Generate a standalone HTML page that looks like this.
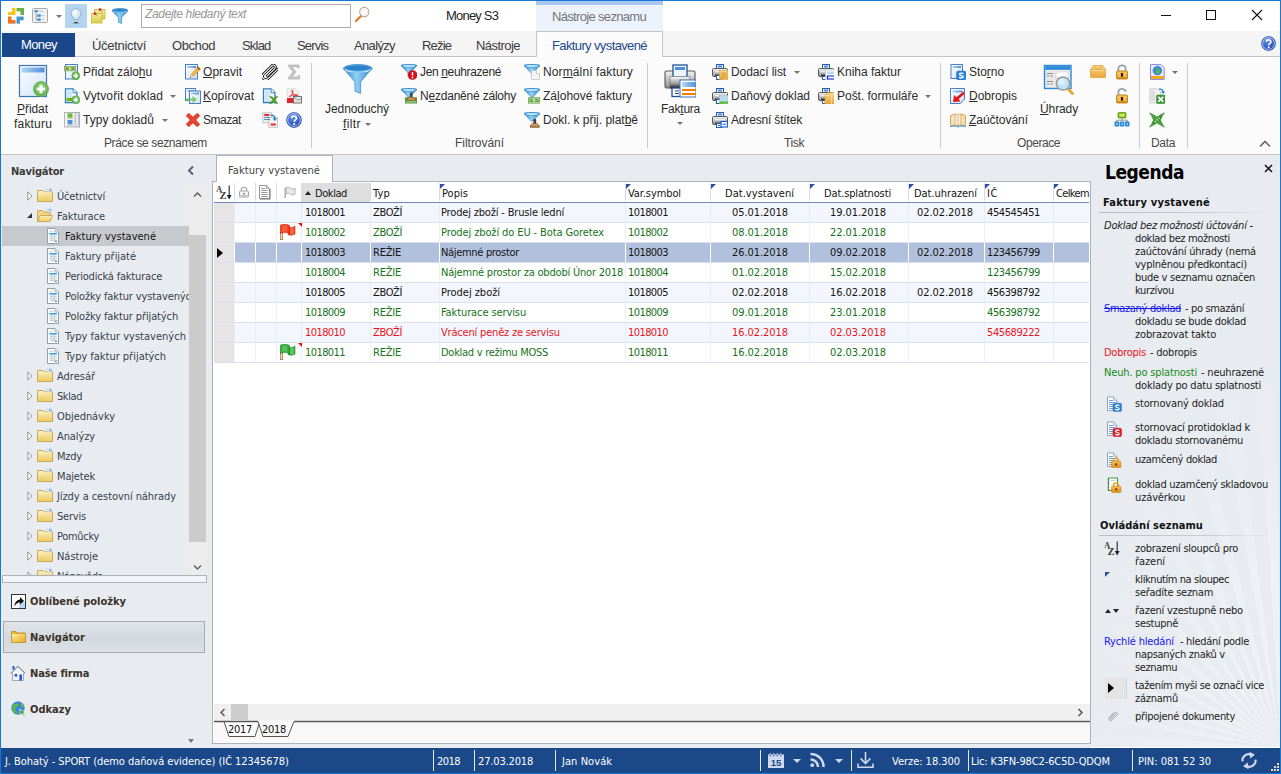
<!DOCTYPE html>
<html lang="cs"><head><meta charset="utf-8"><title>Money S3</title>
<style>
*{box-sizing:border-box;margin:0;padding:0}
html,body{width:1281px;height:774px;overflow:hidden;background:#e8ecf1;font-family:"Liberation Sans",sans-serif;font-size:12px;color:#222}
#win{position:absolute;left:0;top:0;width:1281px;height:774px;overflow:hidden;background:#e8ecf1}
#win>div{position:absolute}
#frame{left:0;top:0;width:1281px;height:774px;border:1px solid #1379d4;pointer-events:none;z-index:50}
#title{left:0;top:0;width:1281px;height:31px;background:#fff}
#tabs{left:0;top:31px;width:1281px;height:26px;background:#f5f5f6;border-bottom:1px solid #c6c6c6}
#ribbon{left:0;top:57px;width:1281px;height:98px;background:#fbfbfb;border-bottom:1px solid #c6c6c6}
.t{position:absolute;white-space:nowrap;line-height:14px}
.rl{position:absolute;white-space:nowrap;font-size:12px;color:#2b2b2b;line-height:14px}
.gl{position:absolute;white-space:nowrap;font-size:12px;color:#484848;line-height:14px}
.sep{position:absolute;top:6px;width:1px;height:85px;background:#c9c9c9}
.dd{position:absolute;width:0;height:0;border-left:3px solid transparent;border-right:3px solid transparent;border-top:3.5px solid #727272}
u{text-decoration:underline;text-underline-offset:1px;text-decoration-thickness:1px}
.tt{position:absolute;white-space:nowrap;font-family:"DejaVu Sans Condensed","Liberation Sans",sans-serif;font-size:11px;line-height:14px;color:#1a1a1a}
#nav{left:0;top:155px;width:212px;height:593px;background:#e8ecf1}
#center{left:213px;top:155px;width:878px;height:589px;overflow:visible}
#legend{left:1091px;top:155px;width:190px;height:593px;background:#e8ecf1}
#status{left:0;top:748px;width:1281px;height:26px;background:#1a4889}
</style></head><body>
<div id="win">
<svg width="0" height="0" style="position:absolute"><defs>
<linearGradient id="gFun" x1="0" y1="0" x2="1" y2="0"><stop offset="0" stop-color="#2f86cc"/><stop offset=".45" stop-color="#8fd0f4"/><stop offset="1" stop-color="#2f8ad0"/></linearGradient>
<linearGradient id="gWin" x1="0" y1="0" x2="1" y2="1"><stop offset="0" stop-color="#ffffff"/><stop offset="1" stop-color="#cfe2f8"/></linearGradient>
<linearGradient id="gTit" x1="0" y1="0" x2="1" y2="0"><stop offset="0" stop-color="#b5d6f3"/><stop offset="1" stop-color="#4c8fd9"/></linearGradient>
<linearGradient id="gFold" x1="0" y1="0" x2="0" y2="1"><stop offset="0" stop-color="#fbeeb8"/><stop offset="1" stop-color="#eccb62"/></linearGradient>
<linearGradient id="gPrn" x1="0" y1="0" x2="0" y2="1"><stop offset="0" stop-color="#f4f4f4"/><stop offset="1" stop-color="#8e8e8e"/></linearGradient>
<linearGradient id="gTray" x1="0" y1="0" x2="0" y2="1"><stop offset="0" stop-color="#ffffff"/><stop offset=".6" stop-color="#9a9a9a"/><stop offset="1" stop-color="#111"/></linearGradient>
<linearGradient id="gLock" x1="0" y1="0" x2="0" y2="1"><stop offset="0" stop-color="#f7c352"/><stop offset="1" stop-color="#d98a12"/></linearGradient>
<linearGradient id="gBox" x1="0" y1="0" x2="0" y2="1"><stop offset="0" stop-color="#f9d489"/><stop offset="1" stop-color="#eaa83a"/></linearGradient>
<radialGradient id="gHelp" cx=".4" cy=".3" r=".8"><stop offset="0" stop-color="#5f8fe8"/><stop offset="1" stop-color="#1c3fa8"/></radialGradient>
<radialGradient id="gPlus" cx=".5" cy=".4" r=".7"><stop offset="0" stop-color="#8fd07e"/><stop offset="1" stop-color="#5aa84a"/></radialGradient>
<radialGradient id="gBulb" cx=".4" cy=".35" r=".7"><stop offset="0" stop-color="#ffffff"/><stop offset="1" stop-color="#bcd6ec"/></radialGradient>
<linearGradient id="gYel" x1="0" y1="0" x2="0" y2="1"><stop offset="0" stop-color="#f4ec9a"/><stop offset="1" stop-color="#dccb48"/></linearGradient>
<linearGradient id="gBook" x1="0" y1="0" x2="1" y2="0"><stop offset="0" stop-color="#f3dcae"/><stop offset=".5" stop-color="#fff7e6"/><stop offset="1" stop-color="#f0d49c"/></linearGradient>
<linearGradient id="gYel2" x1="0" y1="0" x2="1" y2="1"><stop offset="0" stop-color="#fdf0a8"/><stop offset="1" stop-color="#e8a818"/></linearGradient>
</defs></svg>
<div id="title">
<div style="position:absolute;left:65px;top:4px;width:22px;height:24px;background:#b5d5ef"></div>
<svg style="position:absolute;left:8px;top:8px" width="16" height="16" viewBox="0 0 16 16"><path d="M4 0H7.5V7H0V4H4Z" fill="#fbc513"/><path d="M8.5 0H16V7H12.5V3.2H8.5Z" fill="#6db33f"/><path d="M0 8.5H3.5V12H7.5V15.5H0Z" fill="#ee7623"/><path d="M8.5 8.5H15.5V12H12V15.5H8.5Z" fill="#3d9ad6"/><path d="M0.5 15.8H7.5M9 15.8H12M12.3 12.3H15.5M15.8 8.8V12" stroke="#7a7a7a" stroke-width=".6" opacity=".7"/></svg>
<svg style="position:absolute;left:32px;top:8px" width="16" height="16" viewBox="0 0 16 16"><rect x=".5" y=".5" width="15" height="14" rx="1" fill="#f1f1f1" stroke="#a9a9a9" stroke-width="1"/><path d="M4 4.5V12H6M4 8H6" stroke="#8a8a8a" stroke-width=".7" fill="none"/><rect x="2.3" y="2" width="3.6" height="2.6" rx=".8" fill="#4a9ad8"/><rect x="5.3" y="6.3" width="3.6" height="2.6" rx=".8" fill="#4a9ad8"/><rect x="5.3" y="10.3" width="3.6" height="2.6" rx=".8" fill="#4a9ad8"/><path d="M6.8 3.3H11M9.8 7.6H12.5M9.8 11.6H12.5" stroke="#b5b5b5" stroke-width=".8"/></svg>
<div class="dd" style="left:56px;top:15px"></div>
<svg style="position:absolute;left:68px;top:8px" width="16" height="16" viewBox="0 0 16 16"><ellipse cx="8" cy="15.3" rx="4.5" ry=".7" fill="#6a8aa8" opacity=".45"/><path d="M8 .6C4.9 .6 3 2.9 3 5.4C3 7.8 5.2 9.2 6.2 12H9.8C10.8 9.2 13 7.8 13 5.4C13 2.9 11.1 .6 8 .6Z" fill="url(#gBulb)" stroke="#7fa9cf" stroke-width=".8"/><rect x="6.4" y="12" width="3.2" height="2" fill="#e8e8e8" stroke="#999" stroke-width=".4"/><path d="M6.6 14H9.4V15.2H6.6Z" fill="#222"/></svg>
<svg style="position:absolute;left:91px;top:8px" width="16" height="16" viewBox="0 0 16 16"><rect x="3.5" y="1.5" width="10.5" height="9.5" fill="url(#gYel)" stroke="#c9b93a" stroke-width=".8"/><rect x=".5" y="5.5" width="10.5" height="9.5" fill="url(#gYel)" stroke="#c9b93a" stroke-width=".8"/><path d="M9.5 2L11.5 4M4.5 6L6.5 8" stroke="#777" stroke-width=".7"/><circle cx="9" cy="1.6" r="1.4" fill="#e2242c"/><circle cx="4" cy="5.6" r="1.4" fill="#e2242c"/></svg>
<svg style="position:absolute;left:112px;top:8px" width="16" height="16" viewBox="0 0 16 16"><path d="M0 2.6 L6.4 9.5 V14.3 L9.6 15.5 V9.5 L16 2.6 Z" fill="url(#gFun)" stroke="#2a7cc4" stroke-width=".6"/><ellipse cx="8.0" cy="2.6" rx="8.0" ry="2.1" fill="#58aee8" stroke="#2a7cc4" stroke-width=".7"/><ellipse cx="8.0" cy="2.285" rx="7.04" ry="1.26" fill="#2c82c8"/><path d="M1.12 2.915 A6.88 1.5750000000000002 0 0 0 14.879999999999999 2.915" fill="none" stroke="#c4e6fa" stroke-width="0.60"/></svg>
<div style="position:absolute;left:141px;top:4px;width:210px;height:24px;border:1px solid #ababab;background:#fff"></div>
<span class="t" style="left:145px;top:7.3px;letter-spacing:-0.35px;font-style:italic;color:#969696;font-size:12px">Zadejte hledaný text</span>
<svg style="position:absolute;left:354px;top:6px" width="16" height="16" viewBox="0 0 16 16"><path d="M7.2 9.8L2 15" stroke="#e07a28" stroke-width="2.2" stroke-linecap="round"/><circle cx="10.3" cy="6" r="4.6" fill="#fdfdfd" stroke="#c9a58a" stroke-width="1.1"/><circle cx="10.3" cy="6" r="3.4" fill="#fff" stroke="#e8e8ee" stroke-width=".6"/></svg>
<span class="t" style="left:446px;top:8.0px;line-height:16px;letter-spacing:-0.80px;font-size:13px;color:#1e1e1e">Money S3</span>
<div style="position:absolute;left:536px;top:1px;width:127px;height:30px;background:#edf3fc"></div>
<div style="position:absolute;left:536px;top:1px;width:127px;height:4px;background:#a8c6ee"></div>
<span class="t" style="left:552px;top:9.0px;line-height:16px;letter-spacing:-0.67px;font-size:13px;color:#767676">Nástroje seznamu</span>
<div style="position:absolute;left:1161px;top:15px;width:10px;height:1px;background:#111"></div>
<div style="position:absolute;left:1206px;top:10px;width:10px;height:10px;border:1px solid #111"></div>
<svg style="position:absolute;left:1251px;top:9px" width="12" height="12" viewBox="0 0 12 12"><path d="M1 1L11 11M11 1L1 11" stroke="#111" stroke-width="1.1" fill="none"/></svg>
</div>
<div id="tabs">
<div style="position:absolute;left:2px;top:2px;width:73px;height:24px;background:#19478a"></div>
<span class="t" style="left:21px;top:6.0px;line-height:16px;letter-spacing:-0.60px;font-size:13px;color:#fff">Money</span>
<span class="t" style="left:92px;top:6.5px;line-height:16px;letter-spacing:-0.31px;font-size:13px;color:#3b3b3b">Účetnictví</span>
<span class="t" style="left:172px;top:6.5px;line-height:16px;letter-spacing:-0.42px;font-size:13px;color:#3b3b3b">Obchod</span>
<span class="t" style="left:242px;top:6.5px;line-height:16px;letter-spacing:-0.80px;font-size:13px;color:#3b3b3b">Sklad</span>
<span class="t" style="left:297px;top:6.5px;line-height:16px;letter-spacing:-0.80px;font-size:13px;color:#3b3b3b">Servis</span>
<span class="t" style="left:354px;top:6.5px;line-height:16px;letter-spacing:-0.65px;font-size:13px;color:#3b3b3b">Analýzy</span>
<span class="t" style="left:422px;top:6.5px;line-height:16px;letter-spacing:-0.80px;font-size:13px;color:#3b3b3b">Režie</span>
<span class="t" style="left:476px;top:6.5px;line-height:16px;letter-spacing:-0.55px;font-size:13px;color:#3b3b3b">Nástroje</span>
<div style="position:absolute;left:536px;top:0px;width:127px;height:27px;background:#fbfbfb;border:1px solid #c6c6c6;border-bottom:none"></div>
<span class="t" style="left:552px;top:6.5px;line-height:16px;letter-spacing:-0.62px;font-size:13px;color:#1d4a8c">Faktury vystavené</span>
<svg style="position:absolute;left:1261px;top:5px" width="15" height="15" viewBox="0 0 16 16"><circle cx="8" cy="8" r="7.5" fill="url(#gHelp)" stroke="#2747a8" stroke-width=".6"/><circle cx="8" cy="8" r="6.3" fill="none" stroke="#cfe0fb" stroke-width=".8"/><path d="M5.6 6.2C5.6 3.4 10.6 3.4 10.6 6.1C10.6 7.8 8.2 8 8.2 9.8" stroke="#fff" stroke-width="1.7" fill="none"/><circle cx="8.2" cy="12" r="1.05" fill="#fff"/></svg>
</div>
<div id="ribbon">
<svg style="position:absolute;left:18px;top:7px" width="32" height="34" viewBox="0 0 32 34"><rect x="1.5" y="1.5" width="27" height="31" fill="url(#gWin)" stroke="#3f73b8" stroke-width="1.2"/><rect x="3.5" y="3.5" width="23" height="5" fill="url(#gTit)"/><circle cx="23" cy="25" r="7.6" fill="url(#gPlus)" stroke="#58a548" stroke-width=".6"/><path d="M18.82 25H27.18M23 20.82V29.18" stroke="#fff" stroke-width="3.04"/></svg>
<span class="rl" style="left:17px;top:45.4px;letter-spacing:-0.06px;"><u>P</u>řidat</span>
<span class="rl" style="left:14px;top:60.0px;letter-spacing:0.19px;">fakturu</span>
<svg style="position:absolute;left:64px;top:7px" width="16" height="16" viewBox="0 0 16 16"><rect x="1.5" y=".5" width="12" height="14.5" fill="url(#gWin)" stroke="#4a7ec2" stroke-width="1"/><rect x="0" y="2" width="12" height="5.2" fill="#6c9a3c"/><rect x="1" y="3" width="10" height="3.2" fill="none" stroke="#cfe3b0" stroke-width=".7"/><circle cx="6" cy="4.6" r="1.3" fill="#cfe3b0"/><circle cx="11.8" cy="11.8" r="4" fill="url(#gPlus)" stroke="#58a548" stroke-width=".6"/><path d="M9.600000000000001 11.8H14.0M11.8 9.600000000000001V14.0" stroke="#fff" stroke-width="1.60"/></svg>
<span class="rl" style="left:83px;top:8.0px;letter-spacing:-0.08px;">Přidat zálo<u>h</u>u</span>
<svg style="position:absolute;left:64px;top:31px" width="16" height="16" viewBox="0 0 16 16"><path d="M1.5 .8H9L13 4.8V14.5H1.5Z" fill="#fff" stroke="#2a7cc4" stroke-width="1.3"/><path d="M9 .8V4.8H13" fill="#fff" stroke="#2a7cc4" stroke-width="1"/><rect x="2.6" y="2.5" width="6" height="8" fill="#cfe6f6"/><rect x="2.6" y="10" width="9" height="3" fill="#6eb400"/><circle cx="11.8" cy="11.8" r="4" fill="url(#gPlus)" stroke="#58a548" stroke-width=".6"/><path d="M9.600000000000001 11.8H14.0M11.8 9.600000000000001V14.0" stroke="#fff" stroke-width="1.60"/></svg>
<span class="rl" style="left:83px;top:32.0px;letter-spacing:0.12px;">Vytvořit doklad</span>
<div class="dd" style="left:170px;top:38px"></div>
<svg style="position:absolute;left:64px;top:55px" width="16" height="16" viewBox="0 0 16 16"><rect x=".5" y=".5" width="15" height="14.5" fill="#f4f4f4" stroke="#b4b4b4" stroke-width="1"/><rect x="3.5" y="1.3" width="5" height="4.4" fill="#6cb840"/><rect x="3.5" y="8" width="5" height="4.4" fill="#4a90d8"/><rect x="3" y="6.2" width="6" height="1" fill="#c8c8c8"/><rect x="3" y="13" width="6" height="1" fill="#c8c8c8"/><rect x="11" y="1" width="4" height="13.5" fill="#fff" stroke="#9a9a9a" stroke-width=".6"/><rect x="11.8" y="3" width="2.4" height="9.5" fill="#e8eef6" stroke="#8aa0c0" stroke-width=".5"/></svg>
<span class="rl" style="left:83px;top:56.0px;letter-spacing:0.02px;">Typy dokladů</span>
<div class="dd" style="left:162px;top:62px"></div>
<svg style="position:absolute;left:185px;top:7px" width="16" height="16" viewBox="0 0 16 16"><rect x="0.5" y="0.5" width="12" height="14.5" fill="url(#gWin)" stroke="#4a7ec2" stroke-width="1"/><rect x="2" y="2" width="9" height="2" fill="url(#gTit)"/><path d="M13 2.5L15.5 5L8 12.5L5 13.5L6 10.5Z" fill="#f2b24a" stroke="#c98a2a" stroke-width=".5"/><path d="M13 2.5L15.5 5L14.3 6.2L11.8 3.7Z" fill="#a8541c"/><path d="M6 10.5L5 13.5L8 12.5Z" fill="#f4e6cc"/><path d="M5.4 12.3L5 13.5L6.2 13.1Z" fill="#333"/></svg>
<span class="rl" style="left:203px;top:8.0px;letter-spacing:0.05px;"><u>O</u>pravit</span>
<svg style="position:absolute;left:185px;top:31px" width="16" height="16" viewBox="0 0 16 16"><rect x="0.5" y="0.5" width="10" height="12" fill="url(#gWin)" stroke="#4a7ec2" stroke-width="1"/><rect x="2" y="2" width="7" height="2" fill="url(#gTit)"/><rect x="4.5" y="3.0" width="11" height="12.5" fill="url(#gWin)" stroke="#4a7ec2" stroke-width="1"/><rect x="6" y="4.5" width="8" height="2" fill="url(#gTit)"/><path d="M1 10.5H7.5V8L12 11.5L7.5 15V12.5H1Z" fill="#6cc460" opacity=".9"/></svg>
<span class="rl" style="left:203px;top:32.0px;letter-spacing:-0.04px;"><u>K</u>opírovat</span>
<svg style="position:absolute;left:185px;top:55px" width="16" height="16" viewBox="0 0 16 16"><path d="M2.2 3.8L3.8 2.2L8 6.4L12.2 2.2L13.8 3.8L9.6 8L13.8 12.2L12.2 13.8L8 9.6L3.8 13.8L2.2 12.2L6.4 8Z" fill="#ec5e48" stroke="#e4442f" stroke-width="2.2" stroke-linejoin="round"/></svg>
<span class="rl" style="left:203px;top:56.0px;letter-spacing:-0.45px;">Smazat</span>
<svg style="position:absolute;left:262px;top:7px" width="16" height="16" viewBox="0 0 16 16"><g transform="translate(8 8) rotate(-45)"><path d="M-4.6 .9H5.8A2 2 0 0 0 5.8 -3.1H-6A3.25 3.25 0 0 0 -6 3.4H7.4" fill="none" stroke="#111" stroke-width="2.7" stroke-linecap="round"/><path d="M-4.6 .9H5.8A2 2 0 0 0 5.8 -3.1H-6A3.25 3.25 0 0 0 -6 3.4H7.4" fill="none" stroke="#fff" stroke-width="1" stroke-linecap="round"/></g></svg>
<svg style="position:absolute;left:286px;top:7px" width="16" height="16" viewBox="0 0 16 16"><path d="M2.5 1H13V4H11.8L11.2 2.6H6L10 7.8L5.8 13.2H11.4L12.2 11.6H13.4V15H2.5V13.6L7 7.9L2.5 2.2Z" fill="#c9c9c9" stroke="#a4a4a4" stroke-width=".6"/></svg>
<svg style="position:absolute;left:262px;top:31px" width="16" height="16" viewBox="0 0 16 16"><path d="M1.5 .8H9L13 4.8V14.5H1.5Z" fill="#fff" stroke="#2a7cc4" stroke-width="1.3"/><path d="M9 .8V4.8H13" fill="#fff" stroke="#2a7cc4" stroke-width="1"/><rect x="2.6" y="2.5" width="5.8" height="10.5" fill="#cfe6f6"/><path d="M7.5 8.5H10L11.8 10.6L13.8 8.5H16L13 11.8L16 15.5H13.6L11.8 13.2L9.8 15.5H7.3L10.5 11.8Z" fill="#55a52a" stroke="#3c8a1a" stroke-width=".4"/></svg>
<svg style="position:absolute;left:286px;top:31px" width="16" height="16" viewBox="0 0 16 16"><path d="M1 .5H9.5L13 4V15H1Z" fill="#f1f1f1" stroke="#d0d0d0" stroke-width=".6"/><path d="M3.5 8.5C6 7.5 7.5 4.5 6.8 2.6C6.4 1.6 5.4 2.4 6 4.2C6.8 6.6 9.4 8.2 11.5 7.6C12.4 7.2 11.6 6.4 10 6.6C7.5 6.9 5 8 3.5 8.5Z" fill="none" stroke="#e2242c" stroke-width=".9"/><rect x="1" y="10" width="6" height="5" fill="#e2242c"/><rect x="7.5" y="8.5" width="8" height="6.5" fill="#e4e4e4" stroke="#555" stroke-width=".8"/><path d="M7.8 9L11.5 12L15.3 11" fill="none" stroke="#777" stroke-width=".7"/></svg>
<svg style="position:absolute;left:262px;top:55px" width="16" height="16" viewBox="0 0 16 16"><rect x=".8" y=".8" width="9" height="10" fill="#f0f0f0" stroke="#b8b8b8" stroke-width=".8"/><rect x="6.8" y="5.2" width="8.6" height="10" fill="#f0f0f0" stroke="#b8b8b8" stroke-width=".8"/><rect x="2" y="2" width="5.5" height="2" rx="1" fill="#e2242c"/><path d="M2 5.5H8M2 7.5H8" stroke="#4a7ec2" stroke-width=".9"/><rect x="8.5" y="11.5" width="5.5" height="2" rx="1" fill="#e2242c"/><path d="M8.5 3.2C11.5 2.8 12.8 4.2 12.8 6.5" fill="none" stroke="#2a7cc4" stroke-width="1.3"/><path d="M10.6 6.2H15L12.8 9Z" fill="#2a7cc4"/></svg>
<svg style="position:absolute;left:286px;top:55px" width="16" height="16" viewBox="0 0 16 16"><circle cx="8" cy="8" r="7.5" fill="url(#gHelp)" stroke="#2747a8" stroke-width=".6"/><circle cx="8" cy="8" r="6.3" fill="none" stroke="#cfe0fb" stroke-width=".8"/><path d="M5.6 6.2C5.6 3.4 10.6 3.4 10.6 6.1C10.6 7.8 8.2 8 8.2 9.8" stroke="#fff" stroke-width="1.7" fill="none"/><circle cx="8.2" cy="12" r="1.05" fill="#fff"/></svg>
<span class="gl" style="left:104px;top:78.7px;letter-spacing:-0.38px;">Práce se seznamem</span>
<div class="sep" style="left:311px"></div>
<svg style="position:absolute;left:342px;top:6px" width="32" height="32" viewBox="0 0 32 32"><path d="M1.5 5.5600000000000005 L12.9 18.9 V28.18 L18.6 30.5 V18.9 L30.0 5.5600000000000005 Z" fill="url(#gFun)" stroke="#2a7cc4" stroke-width=".6"/><ellipse cx="15.75" cy="5.5600000000000005" rx="14.25" ry="4.0600000000000005" fill="#58aee8" stroke="#2a7cc4" stroke-width=".7"/><ellipse cx="15.75" cy="4.9510000000000005" rx="12.54" ry="2.4360000000000004" fill="#2c82c8"/><path d="M3.495 6.1690000000000005 A12.254999999999999 3.0450000000000004 0 0 0 28.005 6.1690000000000005" fill="none" stroke="#c4e6fa" stroke-width="1.02"/></svg>
<span class="rl" style="left:325px;top:45.4px;letter-spacing:-0.07px;">Jednoduchý</span>
<span class="rl" style="left:343px;top:60.0px;letter-spacing:0.40px;"><u>f</u>iltr</span>
<div class="dd" style="left:365px;top:66px"></div>
<svg style="position:absolute;left:401px;top:7px" width="16" height="16" viewBox="0 0 16 16"><path d="M0 1.5 L7.0 9 H9.0 L16 1.5 Z" fill="url(#gFun)" stroke="#2a7cc4" stroke-width=".5"/><ellipse cx="8.0" cy="1.6" rx="8.0" ry="1.6" fill="#3e96d8" stroke="#2a7cc4" stroke-width=".5"/><ellipse cx="8.0" cy="2" rx="6.5" ry="1" fill="#bfe4f8"/><circle cx="11.5" cy="11" r="4.6" fill="#d8121c" stroke="#a80c12" stroke-width=".5"/><path d="M11.5 8V11.6" stroke="#fff" stroke-width="1.5"/><circle cx="11.5" cy="13.4" r=".85" fill="#fff"/></svg>
<span class="rl" style="left:420px;top:8.0px;letter-spacing:-0.36px;">Jen <u>n</u>euhrazené</span>
<svg style="position:absolute;left:401px;top:31px" width="16" height="16" viewBox="0 0 16 16"><path d="M0 1.5 L7.0 9 H9.0 L16 1.5 Z" fill="url(#gFun)" stroke="#2a7cc4" stroke-width=".5"/><ellipse cx="8.0" cy="1.6" rx="8.0" ry="1.6" fill="#3e96d8" stroke="#2a7cc4" stroke-width=".5"/><ellipse cx="8.0" cy="2" rx="6.5" ry="1" fill="#bfe4f8"/><rect x="4" y="9.3" width="12" height="6.2" fill="#5a9a3a"/><rect x="9" y="4.5" width="2.6" height="5" rx="1" fill="#444"/><path d="M6 12.5C6 10.5 7.5 9.2 10.3 9.2C13 9.2 14.6 10.5 14.6 12.5Z" fill="#c8925a" stroke="#7a4a1a" stroke-width=".5"/><path d="M5.5 13.8H15" stroke="#d8ecc8" stroke-width=".8"/></svg>
<span class="rl" style="left:420px;top:32.0px;letter-spacing:-0.21px;">N<u>e</u>zdaněné zálohy</span>
<svg style="position:absolute;left:524px;top:7px" width="16" height="16" viewBox="0 0 16 16"><path d="M0 1.5 L7.0 9 H9.0 L16 1.5 Z" fill="url(#gFun)" stroke="#2a7cc4" stroke-width=".5"/><ellipse cx="8.0" cy="1.6" rx="8.0" ry="1.6" fill="#3e96d8" stroke="#2a7cc4" stroke-width=".5"/><ellipse cx="8.0" cy="2" rx="6.5" ry="1" fill="#bfe4f8"/><path d="M7.5 6.5H12.5L15.5 9.5V15.5H7.5Z" fill="#f4f4f4" stroke="#c0c0c0" stroke-width=".7"/><path d="M12.5 6.5V9.5H15.5" fill="#fff" stroke="#c0c0c0" stroke-width=".6"/></svg>
<span class="rl" style="left:543px;top:8.0px;letter-spacing:0.12px;">Nor<u>m</u>ální faktury</span>
<svg style="position:absolute;left:524px;top:31px" width="16" height="16" viewBox="0 0 16 16"><path d="M0 1.5 L7.0 9 H9.0 L16 1.5 Z" fill="url(#gFun)" stroke="#2a7cc4" stroke-width=".5"/><ellipse cx="8.0" cy="1.6" rx="8.0" ry="1.6" fill="#3e96d8" stroke="#2a7cc4" stroke-width=".5"/><ellipse cx="8.0" cy="2" rx="6.5" ry="1" fill="#bfe4f8"/><rect x="4" y="9.3" width="12" height="6.2" fill="#5a9a3a"/><rect x="5" y="10.3" width="10" height="4.2" fill="none" stroke="#d2e8be" stroke-width=".7"/><circle cx="10" cy="12.4" r="1.4" fill="#d2e8be"/><path d="M6.2 12.4H7.4M12.6 12.4H13.8" stroke="#d2e8be" stroke-width="1"/></svg>
<span class="rl" style="left:543px;top:32.0px;letter-spacing:0.02px;">Zá<u>l</u>ohové faktury</span>
<svg style="position:absolute;left:524px;top:55px" width="16" height="16" viewBox="0 0 16 16"><path d="M0 1.5 L7.0 9 H9.0 L16 1.5 Z" fill="url(#gFun)" stroke="#2a7cc4" stroke-width=".5"/><ellipse cx="8.0" cy="1.6" rx="8.0" ry="1.6" fill="#3e96d8" stroke="#2a7cc4" stroke-width=".5"/><ellipse cx="8.0" cy="2" rx="6.5" ry="1" fill="#bfe4f8"/><rect x="9.4" y="7" width="2.8" height="5" rx="1" fill="#3c3c3c"/><path d="M6.2 14.6C6.2 12.4 7.8 11.4 10.8 11.4C13.6 11.4 15.4 12.4 15.4 14.6Z" fill="#d09a5c" stroke="#7a4a1a" stroke-width=".6"/><path d="M6 15.2H15.6" stroke="#7a4a1a" stroke-width=".9"/></svg>
<span class="rl" style="left:543px;top:56.0px;letter-spacing:-0.02px;">Dokl. k přij. plat<u>b</u>ě</span>
<span class="gl" style="left:455px;top:78.7px;letter-spacing:-0.03px;">Filtrování</span>
<div class="sep" style="left:647px"></div>
<svg style="position:absolute;left:664px;top:7px" width="32" height="34" viewBox="0 0 32 34"><rect x="1" y="7" width="30" height="17" rx="1.5" fill="url(#gPrn)" stroke="#555" stroke-width="1.1"/><rect x="9" y="1" width="14" height="13" fill="#eef5fd" stroke="#1f4f9a" stroke-width="1.3"/><rect x="11" y="3" width="10" height="3" fill="#4c8fd9"/><rect x="6" y="12.5" width="20" height="12" rx="1" fill="url(#gTray)" stroke="#6a6a6a" stroke-width=".7"/><rect x="8" y="24" width="9" height="8.5" fill="#fff" stroke="#1f4f9a" stroke-width="1.3"/><path d="M11 27H15M11 29.5H15" stroke="#1f4f9a" stroke-width="1.1"/><rect x="16" y="16" width="16" height="17" fill="#fff" stroke="#3f73b8" stroke-width="1"/><rect x="18" y="18" width="14" height="5" fill="url(#gTit)"/><rect x="18" y="25" width="14" height="2" fill="#f57c00"/><rect x="18" y="29" width="14" height="2" fill="#f57c00"/></svg>
<span class="rl" style="left:661px;top:45.4px;letter-spacing:-0.24px;">Fak<u>t</u>ura</span>
<div class="dd" style="left:677px;top:65px"></div>
<svg style="position:absolute;left:712px;top:7px" width="16" height="16" viewBox="0 0 16 16"><rect x="4.5" y=".5" width="7" height="6" fill="#eaf3fd" stroke="#2a5aa8" stroke-width="1"/><rect x="6" y="1.5" width="4" height="2" fill="#4c8fd9"/><rect x=".5" y="4.5" width="15" height="8" rx="1" fill="url(#gPrn)" stroke="#5a5a5a" stroke-width="1"/><rect x="3" y="7" width="10" height="5" fill="url(#gTray)"/><rect x="4.5" y="11.5" width="5" height="4" fill="#fff" stroke="#2a5aa8" stroke-width="1"/><rect x="7.5" y="6.5" width="8.5" height="9" fill="url(#gBox)" stroke="#d8a850" stroke-width=".6"/><path d="M9 9H15M9 11H15M9 13H13" stroke="#c8922a" stroke-width=".8"/></svg>
<span class="rl" style="left:731px;top:8.0px;letter-spacing:-0.09px;">Dodací list</span>
<div class="dd" style="left:794px;top:14px"></div>
<svg style="position:absolute;left:712px;top:31px" width="16" height="16" viewBox="0 0 16 16"><rect x="4.5" y=".5" width="7" height="6" fill="#eaf3fd" stroke="#2a5aa8" stroke-width="1"/><rect x="6" y="1.5" width="4" height="2" fill="#4c8fd9"/><rect x=".5" y="4.5" width="15" height="8" rx="1" fill="url(#gPrn)" stroke="#5a5a5a" stroke-width="1"/><rect x="3" y="7" width="10" height="5" fill="url(#gTray)"/><rect x="4.5" y="11.5" width="5" height="4" fill="#fff" stroke="#2a5aa8" stroke-width="1"/><rect x="7.5" y="7.5" width="8.5" height="8" fill="#bcdcee" stroke="#8ab8d8" stroke-width=".5"/><rect x="7.5" y="13.6" width="8.5" height="2" fill="#5cb818"/></svg>
<span class="rl" style="left:731px;top:32.0px;letter-spacing:-0.03px;">Daňový doklad</span>
<svg style="position:absolute;left:712px;top:55px" width="16" height="16" viewBox="0 0 16 16"><rect x="4.5" y=".5" width="7" height="6" fill="#eaf3fd" stroke="#2a5aa8" stroke-width="1"/><rect x="6" y="1.5" width="4" height="2" fill="#4c8fd9"/><rect x=".5" y="4.5" width="15" height="8" rx="1" fill="url(#gPrn)" stroke="#5a5a5a" stroke-width="1"/><rect x="3" y="7" width="10" height="5" fill="url(#gTray)"/><rect x="4.5" y="11.5" width="5" height="4" fill="#fff" stroke="#2a5aa8" stroke-width="1"/><rect x="9" y="9.5" width="6.5" height="5.5" fill="#fff" stroke="#1f5fc8" stroke-width="1.2"/><path d="M10.5 12.2H14M6 13.5H8" stroke="#1f5fc8" stroke-width="1.1"/></svg>
<span class="rl" style="left:731px;top:56.0px;letter-spacing:-0.17px;">Adresní štítek</span>
<svg style="position:absolute;left:818px;top:7px" width="16" height="16" viewBox="0 0 16 16"><rect x="4.5" y=".5" width="7" height="6" fill="#eaf3fd" stroke="#2a5aa8" stroke-width="1"/><rect x="6" y="1.5" width="4" height="2" fill="#4c8fd9"/><rect x=".5" y="4.5" width="15" height="8" rx="1" fill="url(#gPrn)" stroke="#5a5a5a" stroke-width="1"/><rect x="3" y="7" width="5" height="5" fill="url(#gTray)"/><path d="M4.5 11.5V15.5H8" fill="none" stroke="#2a5aa8" stroke-width="1"/><rect x="7.5" y="6" width="9" height="10" fill="#fff" stroke="#a8c8e8" stroke-width=".6"/><rect x="9" y="7.5" width="7.5" height="2.5" fill="#b8d8f4"/><path d="M9.5 11.5V15.5M9.5 12H16.5M9.5 15H16.5" stroke="#1010e0" stroke-width="1.2" fill="none"/></svg>
<span class="rl" style="left:837px;top:8.0px;">Kniha faktur</span>
<svg style="position:absolute;left:818px;top:31px" width="16" height="16" viewBox="0 0 16 16"><rect x="4.5" y=".5" width="7" height="6" fill="#eaf3fd" stroke="#2a5aa8" stroke-width="1"/><rect x="6" y="1.5" width="4" height="2" fill="#4c8fd9"/><rect x=".5" y="4.5" width="15" height="8" rx="1" fill="url(#gPrn)" stroke="#5a5a5a" stroke-width="1"/><rect x="3" y="7" width="5" height="5" fill="url(#gTray)"/><path d="M4.5 11.5V15.5H8" fill="none" stroke="#2a5aa8" stroke-width="1"/><path d="M7 7L10 4.5H16.5V16H7Z" fill="url(#gBox)" stroke="#d89a30" stroke-width=".6"/><path d="M7 7.5H13.5L16.5 5M13.5 7.5V16" stroke="#fbe3b0" stroke-width=".7" fill="none"/></svg>
<span class="rl" style="left:837px;top:32.0px;letter-spacing:-0.02px;">Pošt. formuláře</span>
<div class="dd" style="left:925px;top:38px"></div>
<span class="gl" style="left:784px;top:78.7px;letter-spacing:-0.39px;">Tisk</span>
<div class="sep" style="left:940px"></div>
<svg style="position:absolute;left:950px;top:7px" width="16" height="16" viewBox="0 0 16 16"><rect x="1.0" y="0.5" width="11.5" height="14" fill="url(#gWin)" stroke="#4a7ec2" stroke-width="1"/><rect x="2.5" y="2" width="8.5" height="2" fill="url(#gTit)"/><rect x="6.5" y="7" width="9.5" height="9" rx="2" fill="#2a86d8" stroke="#1a6ab8" stroke-width=".5"/><path d="M13.4 9.6C12.4 8.8 9.4 8.7 9.4 10.3C9.4 12 13.3 11.1 13.3 12.8C13.3 14.3 10.2 14.2 9.1 13.4" fill="none" stroke="#fff" stroke-width="1.3"/></svg>
<span class="rl" style="left:969px;top:8.0px;letter-spacing:-0.06px;">Sto<u>r</u>no</span>
<svg style="position:absolute;left:950px;top:31px" width="16" height="16" viewBox="0 0 16 16"><path d="M.5 .5H14.5V11L10.5 15.5H.5Z" fill="url(#gWin)" stroke="#4a7ec2" stroke-width="1"/><rect x="2.5" y="2.5" width="10" height="2" fill="url(#gTit)"/><path d="M13.6 3.6L14.4 6L8.6 11L10.4 13.6L3 14L4 7L6.4 9.2Z" fill="#e8141c"/></svg>
<span class="rl" style="left:969px;top:32.0px;"><u>D</u>obropis</span>
<svg style="position:absolute;left:950px;top:55px" width="16" height="16" viewBox="0 0 16 16"><path d="M.5 3.5L5 2C6.5 1.7 7.4 2.3 8 3.2C8.6 2.3 9.5 1.7 11 2L15.5 3.5V14L11 13C9.6 12.8 8.6 13.2 8 14C7.4 13.2 6.4 12.8 5 13L.5 14Z" fill="url(#gBook)" stroke="#c8984a" stroke-width=".8"/><path d="M5 2V13M11 2V13M8 3.2V14" stroke="#c8984a" stroke-width=".7"/><path d="M.5 14.5C4 13.6 6.5 13.8 8 15C9.5 13.8 12 13.6 15.5 14.5" fill="none" stroke="#2a7cc4" stroke-width="1"/></svg>
<span class="rl" style="left:969px;top:56.0px;letter-spacing:-0.04px;"><u>Z</u>aúčtování</span>
<svg style="position:absolute;left:1043px;top:7px" width="32" height="32" viewBox="0 0 32 32"><rect x="1.5" y="1.5" width="26.5" height="23" fill="#e9e9e9" stroke="#2a8ad8" stroke-width="1.4"/><rect x="2.2" y="2.2" width="25" height="3.6" fill="#2a8ad8"/><rect x="13" y="8" width="12" height="6" fill="#fff" stroke="#c4c4c4" stroke-width=".5"/><path d="M4 9.5H10M4 12H6.5M7.5 12H10M4 17.5H10M4 20H6.5M7.5 20H10" stroke="#8e8e8e" stroke-width="1.1"/><path d="M24.5 24.5L29.5 29.5" stroke="#e8a63a" stroke-width="3" stroke-linecap="round"/><circle cx="20" cy="19.5" r="6.6" fill="#bfe4f8" stroke="#9a9a9a" stroke-width="1.5"/><circle cx="18.8" cy="18" r="3.2" fill="#e4f4fd" opacity=".8"/></svg>
<span class="rl" style="left:1040px;top:45.2px;letter-spacing:-0.11px;"><u>Ú</u>hrady</span>
<svg style="position:absolute;left:1090px;top:7px" width="16" height="16" viewBox="0 0 16 16"><path d="M.5 5.5L3.5 1.5H12.5L15.5 5.5V13.5H.5Z" fill="url(#gBox)" stroke="#e0a440" stroke-width=".8"/><path d="M.8 5.5H15.2M3.5 1.8L8 5.3L12.5 1.8" fill="none" stroke="#d89a30" stroke-width=".7"/><path d="M1 6.3H15" stroke="#fbe6b8" stroke-width=".8"/></svg>
<svg style="position:absolute;left:1114px;top:7px" width="16" height="16" viewBox="0 0 16 16"><path d="M4.4 7.5V4.6C4.4 .2 11.6 .2 11.6 4.6V7.5" fill="none" stroke="#9aa0a8" stroke-width="1.8"/><rect x="2.5" y="7" width="11" height="8" rx="1" fill="url(#gLock)" stroke="#b8740c" stroke-width=".8"/><path d="M3.5 9.5H6.3M3.5 12H6.3M9.7 9.5H12.5M9.7 12H12.5" stroke="#fbe3a0" stroke-width=".9"/><rect x="7" y="9" width="2" height="3.6" fill="#2a1a08"/></svg>
<svg style="position:absolute;left:1114px;top:31px" width="16" height="16" viewBox="0 0 16 16"><path d="M4.4 7.5V4C4.4 .2 10 .2 11 2.6" fill="none" stroke="#9aa0a8" stroke-width="1.8"/><path d="M9.8 2.2L12.6 1.4L12 4Z" fill="#8a9098"/><rect x="2.5" y="7" width="11" height="8" rx="1" fill="url(#gLock)" stroke="#b8740c" stroke-width=".8"/><path d="M3.5 9.5H6.3M3.5 12H6.3M9.7 9.5H12.5M9.7 12H12.5" stroke="#fbe3a0" stroke-width=".9"/><rect x="7" y="9" width="2" height="3.6" fill="#2a1a08"/></svg>
<svg style="position:absolute;left:1114px;top:55px" width="16" height="16" viewBox="0 0 16 16"><rect x="4" y=".5" width="8" height="5.5" rx=".8" fill="#6cb400" stroke="#4c8c00" stroke-width=".6"/><rect x="5.2" y="1.6" width="5.6" height="3.2" fill="#c4e870"/><path d="M8 6V8.2M2.8 10V8.2H13.2V10" fill="none" stroke="#8a8a8a" stroke-width=".9"/><rect x=".5" y="9.5" width="4.6" height="5" rx=".8" fill="#2a8ad8"/><rect x="5.7" y="9.5" width="4.6" height="5" rx=".8" fill="#2a8ad8"/><rect x="10.9" y="9.5" width="4.6" height="5" rx=".8" fill="#2a8ad8"/><rect x="2.1" y="11.2" width="1.4" height="1.6" fill="#c4e0f8"/><rect x="7.3" y="11.2" width="1.4" height="1.6" fill="#c4e0f8"/><rect x="12.5" y="11.2" width="1.4" height="1.6" fill="#c4e0f8"/></svg>
<span class="gl" style="left:1017px;top:78.7px;letter-spacing:-0.43px;">Operace</span>
<div class="sep" style="left:1139px"></div>
<svg style="position:absolute;left:1149px;top:7px" width="16" height="16" viewBox="0 0 16 16"><path d="M1.5 .6H12L15.2 3.8V15.4H1.5Z" fill="#e8ecfb" stroke="#8a86d8" stroke-width="1"/><rect x="2" y="12" width="12.7" height="3" fill="#f0a820"/><circle cx="8.4" cy="6.6" r="4.4" fill="#3a8ae0" stroke="#2a5ab8" stroke-width=".5"/><path d="M6 4.5C7.5 3 9.5 4 9 5.6C8.6 7 7 6.4 6.6 8C6.2 9.4 8 10 9.6 9.4C11 8.8 11.4 6.8 10.6 5.4" fill="#58c038" stroke="none"/></svg>
<div class="dd" style="left:1172px;top:14px"></div>
<svg style="position:absolute;left:1149px;top:31px" width="16" height="16" viewBox="0 0 16 16"><path d="M.8 .8H8.5L11.5 3.8V14.8H.8Z" fill="#f2f2f2" stroke="#c4c4c4" stroke-width=".8"/><rect x="2" y="2.5" width="4" height="10.5" fill="#dcdcdc"/><path d="M10 1.2C13 .8 14.2 2 14.2 4" fill="none" stroke="#2a7cc4" stroke-width="1.2"/><path d="M12 3.6H16L14.2 6Z" fill="#2a7cc4"/><rect x="7.5" y="7" width="8.5" height="8.5" rx="1" fill="#3c9a3a" stroke="#2a7a28" stroke-width=".5"/><path d="M9.3 8.8L14.2 13.7M14.2 8.8L9.3 13.7" stroke="#fff" stroke-width="1.7"/></svg>
<svg style="position:absolute;left:1149px;top:55px" width="16" height="16" viewBox="0 0 16 16"><path d="M.5 .8C3.5 2.2 6 3.6 8 5C10 3.6 12.5 2.2 15.5 .8C13.6 3.6 12.2 6 11.6 8C12.2 10 13.6 12.4 15.5 15.2C12.5 13.8 10 12.4 8 11C6 12.4 3.5 13.8 .5 15.2C2.4 12.4 3.8 10 4.4 8C3.8 6 2.4 3.6 .5 .8Z" fill="#46a43a" stroke="#2f8426" stroke-width=".5"/><path d="M3.8 11.6C6 9.6 9 6.6 12.4 4.2" stroke="#2a6a20" stroke-width="2" fill="none" opacity=".5"/><circle cx="6.2" cy="9.6" r=".8" fill="#e4f6d8"/><circle cx="8.1" cy="7.9" r=".8" fill="#e4f6d8"/><circle cx="10" cy="6.2" r=".8" fill="#e4f6d8"/></svg>
<span class="gl" style="left:1151px;top:78.7px;letter-spacing:-0.34px;">Data</span>
<div class="sep" style="left:1187px"></div>
<svg style="position:absolute;left:1259px;top:83px" width="12" height="8" viewBox="0 0 12 8"><path d="M1 6.5L6 1.5L11 6.5" stroke="#666" stroke-width="1.6" fill="none"/></svg>
</div>
<div id="nav">
<span class="tt" style="left:11px;top:9.5px;letter-spacing:-0.22px;font-weight:bold;color:#3a3a3a">Navigátor</span>
<svg style="position:absolute;left:187px;top:10px" width="8" height="11" viewBox="0 0 8 11"><path d="M6 1.5L2 5.5L6 9.5" stroke="#5b6470" stroke-width="2" fill="none"/></svg>
<div style="position:absolute;left:2px;top:29px;width:205px;height:391px;overflow:hidden">
<div style="position:absolute;left:0px;top:42px;width:187px;height:20px;background:#c7cacd"></div>
<div style="position:absolute;left:187px;top:2px;width:17px;height:389px;background:#ececec"></div>
<div style="position:absolute;left:187px;top:51px;width:17px;height:307px;background:#cbcbcb"></div>
<svg style="position:absolute;left:191px;top:7px" width="9" height="7" viewBox="0 0 9 7"><path d="M1 5.5L4.5 2L8 5.5" stroke="#606060" stroke-width="1.5" fill="none"/></svg>
<svg style="position:absolute;left:191px;top:380px" width="9" height="7" viewBox="0 0 9 7"><path d="M1 1.5L4.5 5L8 1.5" stroke="#606060" stroke-width="1.5" fill="none"/></svg>
<svg style="position:absolute;left:25px;top:7px" width="6" height="10" viewBox="0 0 6 10"><path d="M0.8 1L5 5L0.8 9Z" fill="#fff" stroke="#8a8a8a" stroke-width="0.9"/></svg><svg style="position:absolute;left:35px;top:4px" width="16" height="16" viewBox="0 0 16 16"><path d="M9.5 1.2H14.5V4H9.5Z" fill="#fff" stroke="#9ab4d0" stroke-width=".5"/><path d="M12 1.4H14.3V2.6H12Z" fill="#3a9ae8"/><path d="M.5 2.5H6L7.5 4H15.5V13.5H.5Z" fill="url(#gFold)" stroke="#c9a352" stroke-width=".9"/><path d="M1.2 4.8H14.8" stroke="#fdf4d0" stroke-width=".8"/></svg><span class="tt" style="left:55px;top:6.0px;letter-spacing:-0.16px;color:#39404b">Účetnictví</span>
<svg style="position:absolute;left:24px;top:28px" width="7" height="7" viewBox="0 0 7 7"><path d="M6 1V6H1Z" fill="#333"/></svg><svg style="position:absolute;left:35px;top:24px" width="16" height="16" viewBox="0 0 16 16"><path d="M9.5 1.2H14V5H9.5Z" fill="#fff" stroke="#9ab4d0" stroke-width=".5"/><path d="M11.6 1.4H13.8V2.6H11.6Z" fill="#3a9ae8"/><path d="M.5 2.5H5.5L7 4H13V13.5H.5Z" fill="#f0d486" stroke="#c9a352" stroke-width=".9"/><path d="M3.2 7.5H15.8L13 13.5H.5Z" fill="url(#gFold)" stroke="#c9a352" stroke-width=".9"/></svg><span class="tt" style="left:55px;top:26.0px;letter-spacing:-0.03px;color:#39404b">Fakturace</span>
<svg style="position:absolute;left:45px;top:44px" width="16" height="16" viewBox="0 0 16 16"><path d="M.5 .5H8L11.5 4V15.5H.5Z" fill="#fff" stroke="#8e959c" stroke-width=".9"/><path d="M8 .5V4H11.5" fill="#eef2f6" stroke="#8e959c" stroke-width=".7"/><path d="M2.3 3.2H6" stroke="#b8c0c8" stroke-width=".8"/><rect x="2.3" y="5" width="7.6" height="1.6" fill="#3a9ee8"/><path d="M2.3 8.3H9.9M2.3 10.3H9.9M2.3 12.3H9.9M4.8 7V13M7.4 7V13" stroke="#b4bcc6" stroke-width=".7"/><rect x="7.6" y="12.8" width="2.4" height="1.2" fill="#3a9ee8"/></svg>
<span class="tt" style="left:63px;top:46.0px;letter-spacing:0.01px;color:#111">Faktury vystavené</span>
<svg style="position:absolute;left:45px;top:64px" width="16" height="16" viewBox="0 0 16 16"><path d="M.5 .5H8L11.5 4V15.5H.5Z" fill="#fff" stroke="#8e959c" stroke-width=".9"/><path d="M8 .5V4H11.5" fill="#eef2f6" stroke="#8e959c" stroke-width=".7"/><path d="M2.3 3.2H6" stroke="#b8c0c8" stroke-width=".8"/><rect x="2.3" y="5" width="7.6" height="1.6" fill="#3a9ee8"/><path d="M2.3 8.3H9.9M2.3 10.3H9.9M2.3 12.3H9.9M4.8 7V13M7.4 7V13" stroke="#b4bcc6" stroke-width=".7"/><rect x="7.6" y="12.8" width="2.4" height="1.2" fill="#3a9ee8"/></svg>
<span class="tt" style="left:63px;top:66.0px;letter-spacing:-0.04px;color:#39404b">Faktury přijaté</span>
<svg style="position:absolute;left:45px;top:84px" width="16" height="16" viewBox="0 0 16 16"><path d="M.5 .5H8L11.5 4V15.5H.5Z" fill="#fff" stroke="#8e959c" stroke-width=".9"/><path d="M8 .5V4H11.5" fill="#eef2f6" stroke="#8e959c" stroke-width=".7"/><path d="M2.3 3.2H6" stroke="#b8c0c8" stroke-width=".8"/><rect x="2.3" y="5" width="7.6" height="1.6" fill="#3a9ee8"/><path d="M2.3 8.3H9.9M2.3 10.3H9.9M2.3 12.3H9.9M4.8 7V13M7.4 7V13" stroke="#b4bcc6" stroke-width=".7"/><rect x="7.6" y="12.8" width="2.4" height="1.2" fill="#3a9ee8"/></svg>
<span class="tt" style="left:63px;top:86.0px;letter-spacing:-0.19px;color:#39404b">Periodická fakturace</span>
<svg style="position:absolute;left:45px;top:104px" width="16" height="16" viewBox="0 0 16 16"><path d="M.5 .5H8L11.5 4V15.5H.5Z" fill="#fff" stroke="#8e959c" stroke-width=".9"/><path d="M8 .5V4H11.5" fill="#eef2f6" stroke="#8e959c" stroke-width=".7"/><path d="M2.3 3.2H6" stroke="#b8c0c8" stroke-width=".8"/><rect x="2.3" y="5" width="7.6" height="1.6" fill="#3a9ee8"/><path d="M2.3 8.3H9.9M2.3 10.3H9.9M2.3 12.3H9.9M4.8 7V13M7.4 7V13" stroke="#b4bcc6" stroke-width=".7"/><rect x="7.6" y="12.8" width="2.4" height="1.2" fill="#3a9ee8"/></svg>
<div style="position:absolute;left:63px;top:105px;width:124px;height:14px;overflow:hidden"><span class="tt" style="left:0px;top:1.0px;letter-spacing:-0.12px;color:#39404b">Položky faktur vystavených</span></div>
<svg style="position:absolute;left:45px;top:124px" width="16" height="16" viewBox="0 0 16 16"><path d="M.5 .5H8L11.5 4V15.5H.5Z" fill="#fff" stroke="#8e959c" stroke-width=".9"/><path d="M8 .5V4H11.5" fill="#eef2f6" stroke="#8e959c" stroke-width=".7"/><path d="M2.3 3.2H6" stroke="#b8c0c8" stroke-width=".8"/><rect x="2.3" y="5" width="7.6" height="1.6" fill="#3a9ee8"/><path d="M2.3 8.3H9.9M2.3 10.3H9.9M2.3 12.3H9.9M4.8 7V13M7.4 7V13" stroke="#b4bcc6" stroke-width=".7"/><rect x="7.6" y="12.8" width="2.4" height="1.2" fill="#3a9ee8"/></svg>
<span class="tt" style="left:63px;top:126.0px;letter-spacing:-0.12px;color:#39404b">Položky faktur přijatých</span>
<svg style="position:absolute;left:45px;top:144px" width="16" height="16" viewBox="0 0 16 16"><path d="M.5 .5H8L11.5 4V15.5H.5Z" fill="#fff" stroke="#8e959c" stroke-width=".9"/><path d="M8 .5V4H11.5" fill="#eef2f6" stroke="#8e959c" stroke-width=".7"/><path d="M2.3 3.2H6" stroke="#b8c0c8" stroke-width=".8"/><rect x="2.3" y="5" width="7.6" height="1.6" fill="#3a9ee8"/><path d="M2.3 8.3H9.9M2.3 10.3H9.9M2.3 12.3H9.9M4.8 7V13M7.4 7V13" stroke="#b4bcc6" stroke-width=".7"/><rect x="7.6" y="12.8" width="2.4" height="1.2" fill="#3a9ee8"/></svg>
<span class="tt" style="left:63px;top:146.0px;letter-spacing:0.01px;color:#39404b">Typy faktur vystavených</span>
<svg style="position:absolute;left:45px;top:164px" width="16" height="16" viewBox="0 0 16 16"><path d="M.5 .5H8L11.5 4V15.5H.5Z" fill="#fff" stroke="#8e959c" stroke-width=".9"/><path d="M8 .5V4H11.5" fill="#eef2f6" stroke="#8e959c" stroke-width=".7"/><path d="M2.3 3.2H6" stroke="#b8c0c8" stroke-width=".8"/><rect x="2.3" y="5" width="7.6" height="1.6" fill="#3a9ee8"/><path d="M2.3 8.3H9.9M2.3 10.3H9.9M2.3 12.3H9.9M4.8 7V13M7.4 7V13" stroke="#b4bcc6" stroke-width=".7"/><rect x="7.6" y="12.8" width="2.4" height="1.2" fill="#3a9ee8"/></svg>
<span class="tt" style="left:63px;top:166.0px;letter-spacing:-0.02px;color:#39404b">Typy faktur přijatých</span>
<svg style="position:absolute;left:25px;top:187px" width="6" height="10" viewBox="0 0 6 10"><path d="M0.8 1L5 5L0.8 9Z" fill="#fff" stroke="#8a8a8a" stroke-width="0.9"/></svg><svg style="position:absolute;left:35px;top:184px" width="16" height="16" viewBox="0 0 16 16"><path d="M9.5 1.2H14.5V4H9.5Z" fill="#fff" stroke="#9ab4d0" stroke-width=".5"/><path d="M12 1.4H14.3V2.6H12Z" fill="#3a9ae8"/><path d="M.5 2.5H6L7.5 4H15.5V13.5H.5Z" fill="url(#gFold)" stroke="#c9a352" stroke-width=".9"/><path d="M1.2 4.8H14.8" stroke="#fdf4d0" stroke-width=".8"/></svg><span class="tt" style="left:55px;top:186.0px;letter-spacing:-0.01px;color:#39404b">Adresář</span>
<svg style="position:absolute;left:25px;top:207px" width="6" height="10" viewBox="0 0 6 10"><path d="M0.8 1L5 5L0.8 9Z" fill="#fff" stroke="#8a8a8a" stroke-width="0.9"/></svg><svg style="position:absolute;left:35px;top:204px" width="16" height="16" viewBox="0 0 16 16"><path d="M9.5 1.2H14.5V4H9.5Z" fill="#fff" stroke="#9ab4d0" stroke-width=".5"/><path d="M12 1.4H14.3V2.6H12Z" fill="#3a9ae8"/><path d="M.5 2.5H6L7.5 4H15.5V13.5H.5Z" fill="url(#gFold)" stroke="#c9a352" stroke-width=".9"/><path d="M1.2 4.8H14.8" stroke="#fdf4d0" stroke-width=".8"/></svg><span class="tt" style="left:55px;top:206.0px;letter-spacing:-0.42px;color:#39404b">Sklad</span>
<svg style="position:absolute;left:25px;top:227px" width="6" height="10" viewBox="0 0 6 10"><path d="M0.8 1L5 5L0.8 9Z" fill="#fff" stroke="#8a8a8a" stroke-width="0.9"/></svg><svg style="position:absolute;left:35px;top:224px" width="16" height="16" viewBox="0 0 16 16"><path d="M9.5 1.2H14.5V4H9.5Z" fill="#fff" stroke="#9ab4d0" stroke-width=".5"/><path d="M12 1.4H14.3V2.6H12Z" fill="#3a9ae8"/><path d="M.5 2.5H6L7.5 4H15.5V13.5H.5Z" fill="url(#gFold)" stroke="#c9a352" stroke-width=".9"/><path d="M1.2 4.8H14.8" stroke="#fdf4d0" stroke-width=".8"/></svg><span class="tt" style="left:55px;top:226.0px;letter-spacing:-0.06px;color:#39404b">Objednávky</span>
<svg style="position:absolute;left:25px;top:247px" width="6" height="10" viewBox="0 0 6 10"><path d="M0.8 1L5 5L0.8 9Z" fill="#fff" stroke="#8a8a8a" stroke-width="0.9"/></svg><svg style="position:absolute;left:35px;top:244px" width="16" height="16" viewBox="0 0 16 16"><path d="M9.5 1.2H14.5V4H9.5Z" fill="#fff" stroke="#9ab4d0" stroke-width=".5"/><path d="M12 1.4H14.3V2.6H12Z" fill="#3a9ae8"/><path d="M.5 2.5H6L7.5 4H15.5V13.5H.5Z" fill="url(#gFold)" stroke="#c9a352" stroke-width=".9"/><path d="M1.2 4.8H14.8" stroke="#fdf4d0" stroke-width=".8"/></svg><span class="tt" style="left:55px;top:246.0px;letter-spacing:-0.11px;color:#39404b">Analýzy</span>
<svg style="position:absolute;left:25px;top:267px" width="6" height="10" viewBox="0 0 6 10"><path d="M0.8 1L5 5L0.8 9Z" fill="#fff" stroke="#8a8a8a" stroke-width="0.9"/></svg><svg style="position:absolute;left:35px;top:264px" width="16" height="16" viewBox="0 0 16 16"><path d="M9.5 1.2H14.5V4H9.5Z" fill="#fff" stroke="#9ab4d0" stroke-width=".5"/><path d="M12 1.4H14.3V2.6H12Z" fill="#3a9ae8"/><path d="M.5 2.5H6L7.5 4H15.5V13.5H.5Z" fill="url(#gFold)" stroke="#c9a352" stroke-width=".9"/><path d="M1.2 4.8H14.8" stroke="#fdf4d0" stroke-width=".8"/></svg><span class="tt" style="left:55px;top:266.0px;letter-spacing:-0.22px;color:#39404b">Mzdy</span>
<svg style="position:absolute;left:25px;top:287px" width="6" height="10" viewBox="0 0 6 10"><path d="M0.8 1L5 5L0.8 9Z" fill="#fff" stroke="#8a8a8a" stroke-width="0.9"/></svg><svg style="position:absolute;left:35px;top:284px" width="16" height="16" viewBox="0 0 16 16"><path d="M9.5 1.2H14.5V4H9.5Z" fill="#fff" stroke="#9ab4d0" stroke-width=".5"/><path d="M12 1.4H14.3V2.6H12Z" fill="#3a9ae8"/><path d="M.5 2.5H6L7.5 4H15.5V13.5H.5Z" fill="url(#gFold)" stroke="#c9a352" stroke-width=".9"/><path d="M1.2 4.8H14.8" stroke="#fdf4d0" stroke-width=".8"/></svg><span class="tt" style="left:55px;top:286.0px;letter-spacing:-0.16px;color:#39404b">Majetek</span>
<svg style="position:absolute;left:25px;top:307px" width="6" height="10" viewBox="0 0 6 10"><path d="M0.8 1L5 5L0.8 9Z" fill="#fff" stroke="#8a8a8a" stroke-width="0.9"/></svg><svg style="position:absolute;left:35px;top:304px" width="16" height="16" viewBox="0 0 16 16"><path d="M9.5 1.2H14.5V4H9.5Z" fill="#fff" stroke="#9ab4d0" stroke-width=".5"/><path d="M12 1.4H14.3V2.6H12Z" fill="#3a9ae8"/><path d="M.5 2.5H6L7.5 4H15.5V13.5H.5Z" fill="url(#gFold)" stroke="#c9a352" stroke-width=".9"/><path d="M1.2 4.8H14.8" stroke="#fdf4d0" stroke-width=".8"/></svg><span class="tt" style="left:55px;top:306.0px;letter-spacing:-0.08px;color:#39404b">Jízdy a cestovní náhrady</span>
<svg style="position:absolute;left:25px;top:327px" width="6" height="10" viewBox="0 0 6 10"><path d="M0.8 1L5 5L0.8 9Z" fill="#fff" stroke="#8a8a8a" stroke-width="0.9"/></svg><svg style="position:absolute;left:35px;top:324px" width="16" height="16" viewBox="0 0 16 16"><path d="M9.5 1.2H14.5V4H9.5Z" fill="#fff" stroke="#9ab4d0" stroke-width=".5"/><path d="M12 1.4H14.3V2.6H12Z" fill="#3a9ae8"/><path d="M.5 2.5H6L7.5 4H15.5V13.5H.5Z" fill="url(#gFold)" stroke="#c9a352" stroke-width=".9"/><path d="M1.2 4.8H14.8" stroke="#fdf4d0" stroke-width=".8"/></svg><span class="tt" style="left:55px;top:326.0px;letter-spacing:-0.20px;color:#39404b">Servis</span>
<svg style="position:absolute;left:25px;top:347px" width="6" height="10" viewBox="0 0 6 10"><path d="M0.8 1L5 5L0.8 9Z" fill="#fff" stroke="#8a8a8a" stroke-width="0.9"/></svg><svg style="position:absolute;left:35px;top:344px" width="16" height="16" viewBox="0 0 16 16"><path d="M9.5 1.2H14.5V4H9.5Z" fill="#fff" stroke="#9ab4d0" stroke-width=".5"/><path d="M12 1.4H14.3V2.6H12Z" fill="#3a9ae8"/><path d="M.5 2.5H6L7.5 4H15.5V13.5H.5Z" fill="url(#gFold)" stroke="#c9a352" stroke-width=".9"/><path d="M1.2 4.8H14.8" stroke="#fdf4d0" stroke-width=".8"/></svg><span class="tt" style="left:55px;top:346.0px;letter-spacing:-0.31px;color:#39404b">Pomůcky</span>
<svg style="position:absolute;left:25px;top:367px" width="6" height="10" viewBox="0 0 6 10"><path d="M0.8 1L5 5L0.8 9Z" fill="#fff" stroke="#8a8a8a" stroke-width="0.9"/></svg><svg style="position:absolute;left:35px;top:364px" width="16" height="16" viewBox="0 0 16 16"><path d="M9.5 1.2H14.5V4H9.5Z" fill="#fff" stroke="#9ab4d0" stroke-width=".5"/><path d="M12 1.4H14.3V2.6H12Z" fill="#3a9ae8"/><path d="M.5 2.5H6L7.5 4H15.5V13.5H.5Z" fill="url(#gFold)" stroke="#c9a352" stroke-width=".9"/><path d="M1.2 4.8H14.8" stroke="#fdf4d0" stroke-width=".8"/></svg><span class="tt" style="left:55px;top:366.0px;letter-spacing:-0.03px;color:#39404b">Nástroje</span>
<svg style="position:absolute;left:25px;top:387px" width="6" height="10" viewBox="0 0 6 10"><path d="M0.8 1L5 5L0.8 9Z" fill="#fff" stroke="#8a8a8a" stroke-width="0.9"/></svg><svg style="position:absolute;left:35px;top:384px" width="16" height="16" viewBox="0 0 16 16"><path d="M9.5 1.2H14.5V4H9.5Z" fill="#fff" stroke="#9ab4d0" stroke-width=".5"/><path d="M12 1.4H14.3V2.6H12Z" fill="#3a9ae8"/><path d="M.5 2.5H6L7.5 4H15.5V13.5H.5Z" fill="url(#gFold)" stroke="#c9a352" stroke-width=".9"/><path d="M1.2 4.8H14.8" stroke="#fdf4d0" stroke-width=".8"/></svg><span class="tt" style="left:55px;top:386.0px;letter-spacing:-0.51px;color:#39404b">Nápověda</span>
</div>
<div style="position:absolute;left:2px;top:420px;width:205px;height:8px;background:#f2f4f7;border:1px solid #aeb2b8"></div>
<svg style="position:absolute;left:11px;top:439px" width="16" height="16" viewBox="0 0 16 16"><rect x=".5" y=".5" width="14" height="14" fill="#fff" stroke="#333" stroke-width="1"/><rect x="8" y="8" width="6" height="6" fill="#bcd8f4"/><path d="M3.5 12.5C3.5 8.5 5.5 6 9 5.5V3L13 7L9 10.5V8.2C6.5 8.4 4.8 9.8 3.5 12.5Z" fill="#111"/></svg>
<span class="tt" style="left:30px;top:440.0px;letter-spacing:-0.01px;font-weight:bold;color:#3a3128">Oblíbené položky</span>
<div style="position:absolute;left:3px;top:466px;width:202px;height:32px;border:1px solid #a7abb1;background:linear-gradient(#e1e5ea,#d3d8df 55%,#dde1e7)"></div>
<svg style="position:absolute;left:11px;top:474px" width="16" height="16" viewBox="0 0 16 16"><path d="M.5 2.5H5L6.2 4H14.5V13.5H.5Z" fill="#e8b830" stroke="#b88a1a" stroke-width=".8"/><path d="M.9 5H14.1V13.1H.9Z" fill="url(#gYel2)"/></svg>
<span class="tt" style="left:30px;top:476.0px;font-weight:bold;color:#3a3128">Navigátor</span>
<svg style="position:absolute;left:10px;top:510px" width="16" height="16" viewBox="0 0 16 16"><path d="M8 1L.8 8.2H2.5V15.5H13.5V8.2H15.2Z" fill="#f2f4f7" stroke="#8e96a2" stroke-width=".8"/><path d="M8 1.4L1.4 8" stroke="#7a8290" stroke-width="1" fill="none"/><path d="M8 1.4L14.6 8" stroke="#7a8290" stroke-width="1" fill="none"/><rect x="2.5" y="1" width="2" height="3.6" fill="#2a56c8"/><rect x="4.6" y="9" width="2.6" height="2.6" fill="#2a56c8"/><rect x="9.4" y="9.5" width="2.6" height="6" fill="#2a56c8"/></svg>
<span class="tt" style="left:30px;top:512.0px;letter-spacing:-0.12px;font-weight:bold;color:#3a3128">Naše firma</span>
<svg style="position:absolute;left:11px;top:546px" width="16" height="16" viewBox="0 0 16 16"><circle cx="7" cy="7" r="6.3" fill="#3a86e0" stroke="#2a5ab8" stroke-width=".5"/><path d="M3 3.5C5 1.5 8 2.5 7.5 4.6C7 6.4 4.6 5.8 4.2 7.8C3.8 9.8 6 10.8 7.5 12.5C5 13 2 11 1.2 8C1 6 1.8 4.5 3 3.5Z" fill="#5cc038"/><path d="M9.5 2C11.5 2.8 12.8 4.5 13 6.5C11.5 6.8 10 6 9.8 4.5Z" fill="#5cc038"/><path d="M8.5 8L14.8 11.2L12.2 12L14.2 14.8L13 15.6L11.2 12.8L9.4 14.6Z" fill="#38a838" stroke="#fff" stroke-width=".6"/></svg>
<span class="tt" style="left:30px;top:548.0px;letter-spacing:0.01px;font-weight:bold;color:#3a3128">Odkazy</span>
<div class="dd" style="left:187.5px;top:584px;border-top-color:#777;border-left-width:3.5px;border-right-width:3.5px;border-top-width:4px"></div>
</div>
<div id="center">
<div style="position:absolute;left:-1px;top:26px;width:879px;height:563px;background:#fff;border:1px solid #adb3be"></div>
<div style="position:absolute;left:3px;top:0px;width:117px;height:27px;background:#fff;border:1px solid #adb3be;border-bottom:none"></div>
<span class="tt" style="left:15px;top:9.0px;letter-spacing:0.07px;color:#444">Faktury vystavené</span>
<div style="position:absolute;left:1px;top:27px;width:875px;height:20px;background:#fff"></div>
<div style="position:absolute;left:88px;top:28px;width:69px;height:19px;background:#dedede"></div>
<div style="position:absolute;left:1px;top:47px;width:875px;height:1px;background:#7189b9"></div>
<div style="position:absolute;left:21px;top:28px;width:1px;height:18px;background:#d3dae8"></div>
<div style="position:absolute;left:42px;top:28px;width:1px;height:18px;background:#d3dae8"></div>
<div style="position:absolute;left:63px;top:28px;width:1px;height:18px;background:#d3dae8"></div>
<div style="position:absolute;left:157px;top:28px;width:1px;height:18px;background:#d3dae8"></div>
<div style="position:absolute;left:226px;top:28px;width:1px;height:18px;background:#d3dae8"></div>
<div style="position:absolute;left:412px;top:28px;width:1px;height:18px;background:#d3dae8"></div>
<div style="position:absolute;left:497px;top:28px;width:1px;height:18px;background:#d3dae8"></div>
<div style="position:absolute;left:596px;top:28px;width:1px;height:18px;background:#d3dae8"></div>
<div style="position:absolute;left:695px;top:28px;width:1px;height:18px;background:#d3dae8"></div>
<div style="position:absolute;left:771px;top:28px;width:1px;height:18px;background:#d3dae8"></div>
<div style="position:absolute;left:840px;top:28px;width:1px;height:18px;background:#d3dae8"></div>
<svg style="position:absolute;left:3px;top:30px" width="16" height="16" viewBox="0 0 16 16"><text x="0.3" y="6.8" font-family="Liberation Serif,serif" font-weight="bold" font-size="8" fill="#3a3a3a">A</text><text x="3.6" y="14.2" font-family="Liberation Serif,serif" font-weight="bold" font-size="10.5" fill="#3a3a3a">Z</text><path d="M13.2 .5V13" stroke="#222" stroke-width="1.1"/><path d="M10.8 10L13.2 14.5L15.6 10Z" fill="#222"/></svg>
<svg style="position:absolute;left:25px;top:31px" width="16" height="16" viewBox="0 0 16 16"><path d="M3.3 5.5V3.8C3.3 .6 8.7 .6 8.7 3.8V5.5" fill="none" stroke="#b0b0b0" stroke-width="1.3"/><rect x="1.5" y="5" width="9" height="6" rx=".8" fill="#f2f2f2" stroke="#a6a6a6" stroke-width="1"/><path d="M2 9.6H10" stroke="#c8c8c8" stroke-width="1.4"/><rect x="5.3" y="7" width="1.5" height="1.5" fill="#666"/></svg>
<svg style="position:absolute;left:46px;top:30px" width="16" height="16" viewBox="0 0 16 16"><path d="M.5 .5H7.5L10.5 3.5V13.5H.5Z" fill="#fff" stroke="#8a8a8a" stroke-width=".9"/><path d="M7.5 .5V3.5H10.5" fill="none" stroke="#8a8a8a" stroke-width=".7"/><path d="M2.2 3.5H6.5M2.2 5.5H8.8M2.2 7.5H8.8M2.2 9.5H8.8M2.2 11.5H8.8" stroke="#8e8e8e" stroke-width=".9"/><path d="M1 14.2H11.2V4" stroke="#444" stroke-width=".8" fill="none" opacity=".7"/></svg>
<svg style="position:absolute;left:70px;top:31px" width="16" height="16" viewBox="0 0 16 16"><path d="M2.2 1.5V12" stroke="#a8a8a8" stroke-width="1.3"/><path d="M3 2C5 .8 6.2 1.2 7.5 2.2C8.8 3.2 10 3.2 12 2.2V8.2C10 9.2 8.8 9.2 7.5 8.2C6.2 7.2 5 7 3 8Z" fill="#e8e8e8" stroke="#a8a8a8" stroke-width=".9"/></svg>
<svg style="position:absolute;left:92px;top:36px" width="6" height="4" viewBox="0 0 6 4"><path d="M0 4L3 0L6 4Z" fill="#222"/></svg>
<span class="tt" style="left:102px;top:32.0px;letter-spacing:-0.42px;color:#141414">Doklad</span>
<span class="tt" style="left:160px;top:32.0px;letter-spacing:0.18px;color:#141414">Typ</span>
<span class="tt" style="left:229px;top:32.0px;letter-spacing:0.04px;color:#141414">Popis</span>
<span class="tt" style="left:415px;top:32.0px;letter-spacing:-0.09px;color:#141414">Var.symbol</span>
<span class="tt" style="left:512px;top:32.0px;letter-spacing:0.04px;color:#141414">Dat.vystavení</span>
<span class="tt" style="left:611px;top:32.0px;letter-spacing:-0.14px;color:#141414">Dat.splatnosti</span>
<span class="tt" style="left:701px;top:32.0px;letter-spacing:-0.06px;color:#141414">Dat.uhrazení</span>
<span class="tt" style="left:774px;top:32.0px;letter-spacing:0.59px;color:#141414">IČ</span>
<span class="tt" style="left:843px;top:32.0px;letter-spacing:-0.64px;color:#141414">Celkem</span>
<svg style="position:absolute;left:227px;top:29px" width="5" height="5" viewBox="0 0 5 5"><path d="M0 0H5L0 5Z" fill="#2a4fa0"/></svg>
<svg style="position:absolute;left:413px;top:29px" width="5" height="5" viewBox="0 0 5 5"><path d="M0 0H5L0 5Z" fill="#2a4fa0"/></svg>
<svg style="position:absolute;left:498px;top:29px" width="5" height="5" viewBox="0 0 5 5"><path d="M0 0H5L0 5Z" fill="#2a4fa0"/></svg>
<svg style="position:absolute;left:597px;top:29px" width="5" height="5" viewBox="0 0 5 5"><path d="M0 0H5L0 5Z" fill="#2a4fa0"/></svg>
<svg style="position:absolute;left:696px;top:29px" width="5" height="5" viewBox="0 0 5 5"><path d="M0 0H5L0 5Z" fill="#2a4fa0"/></svg>
<svg style="position:absolute;left:772px;top:29px" width="5" height="5" viewBox="0 0 5 5"><path d="M0 0H5L0 5Z" fill="#2a4fa0"/></svg>
<svg style="position:absolute;left:841px;top:29px" width="5" height="5" viewBox="0 0 5 5"><path d="M0 0H5L0 5Z" fill="#2a4fa0"/></svg>
<div style="position:absolute;left:22px;top:48px;width:854px;height:19px;background:#f3f6fc"></div>
<div style="position:absolute;left:1px;top:48px;width:20px;height:19px;background:#e5e5e5"></div>
<div style="position:absolute;left:1px;top:67px;width:875px;height:1px;background:#dbe2ef"></div>
<div style="position:absolute;left:21px;top:48px;width:1px;height:19px;background:#e6ebf5"></div>
<div style="position:absolute;left:42px;top:48px;width:1px;height:19px;background:#e6ebf5"></div>
<div style="position:absolute;left:63px;top:48px;width:1px;height:19px;background:#e6ebf5"></div>
<div style="position:absolute;left:88px;top:48px;width:1px;height:19px;background:#e6ebf5"></div>
<div style="position:absolute;left:157px;top:48px;width:1px;height:19px;background:#e6ebf5"></div>
<div style="position:absolute;left:226px;top:48px;width:1px;height:19px;background:#e6ebf5"></div>
<div style="position:absolute;left:412px;top:48px;width:1px;height:19px;background:#e6ebf5"></div>
<div style="position:absolute;left:497px;top:48px;width:1px;height:19px;background:#e6ebf5"></div>
<div style="position:absolute;left:596px;top:48px;width:1px;height:19px;background:#e6ebf5"></div>
<div style="position:absolute;left:695px;top:48px;width:1px;height:19px;background:#e6ebf5"></div>
<div style="position:absolute;left:771px;top:48px;width:1px;height:19px;background:#e6ebf5"></div>
<div style="position:absolute;left:840px;top:48px;width:1px;height:19px;background:#e6ebf5"></div>
<span class="tt" style="left:92px;top:51.0px;letter-spacing:-0.58px;color:#141414">1018001</span>
<span class="tt" style="left:160px;top:51.0px;letter-spacing:-0.37px;color:#141414">ZBOŽÍ</span>
<span class="tt" style="left:228px;top:51.0px;letter-spacing:-0.17px;color:#141414">Prodej zboží - Brusle lední</span>
<span class="tt" style="left:415px;top:51.0px;letter-spacing:-0.58px;color:#141414">1018001</span>
<span class="tt" style="left:519px;top:51.0px;letter-spacing:-0.06px;color:#141414">05.01.2018</span>
<span class="tt" style="left:617px;top:51.0px;letter-spacing:-0.06px;color:#141414">19.01.2018</span>
<span class="tt" style="left:704px;top:51.0px;letter-spacing:-0.06px;color:#141414">02.02.2018</span>
<span class="tt" style="left:774px;top:51.0px;letter-spacing:-0.41px;color:#141414">454545451</span>
<div style="position:absolute;left:22px;top:68px;width:854px;height:19px;background:#fff"></div>
<div style="position:absolute;left:1px;top:68px;width:20px;height:19px;background:#e5e5e5"></div>
<div style="position:absolute;left:1px;top:87px;width:875px;height:1px;background:#dbe2ef"></div>
<div style="position:absolute;left:21px;top:68px;width:1px;height:19px;background:#eef1f7"></div>
<div style="position:absolute;left:42px;top:68px;width:1px;height:19px;background:#eef1f7"></div>
<div style="position:absolute;left:63px;top:68px;width:1px;height:19px;background:#eef1f7"></div>
<div style="position:absolute;left:88px;top:68px;width:1px;height:19px;background:#eef1f7"></div>
<div style="position:absolute;left:157px;top:68px;width:1px;height:19px;background:#eef1f7"></div>
<div style="position:absolute;left:226px;top:68px;width:1px;height:19px;background:#eef1f7"></div>
<div style="position:absolute;left:412px;top:68px;width:1px;height:19px;background:#eef1f7"></div>
<div style="position:absolute;left:497px;top:68px;width:1px;height:19px;background:#eef1f7"></div>
<div style="position:absolute;left:596px;top:68px;width:1px;height:19px;background:#eef1f7"></div>
<div style="position:absolute;left:695px;top:68px;width:1px;height:19px;background:#eef1f7"></div>
<div style="position:absolute;left:771px;top:68px;width:1px;height:19px;background:#eef1f7"></div>
<div style="position:absolute;left:840px;top:68px;width:1px;height:19px;background:#eef1f7"></div>
<span class="tt" style="left:92px;top:71.0px;letter-spacing:-0.58px;color:#157318">1018002</span>
<span class="tt" style="left:160px;top:71.0px;letter-spacing:-0.37px;color:#157318">ZBOŽÍ</span>
<span class="tt" style="left:228px;top:71.0px;letter-spacing:-0.11px;color:#157318">Prodej zboží do EU - Bota Goretex</span>
<span class="tt" style="left:415px;top:71.0px;letter-spacing:-0.58px;color:#157318">1018002</span>
<span class="tt" style="left:519px;top:71.0px;letter-spacing:-0.06px;color:#157318">08.01.2018</span>
<span class="tt" style="left:617px;top:71.0px;letter-spacing:-0.06px;color:#157318">22.01.2018</span>
<svg style="position:absolute;left:67px;top:69px" width="16" height="16" viewBox="0 0 16 16"><rect x=".5" y="8.5" width="2.2" height="7.2" fill="#f4e0c0" stroke="#a8682c" stroke-width=".7"/><path d="M8 2.6C9.8 4 12.6 3.8 15 2V10C12.6 11.6 9.8 11.6 8 10.4Z" fill="#ee3b1e" stroke="#c8240c" stroke-width=".5"/><path d="M10.2 4.2C11.6 4.4 12.8 4 13.8 3.4V10C12.8 10.6 11.6 10.8 10.2 10.6Z" fill="#ff8a5c" opacity=".6"/><path d="M.3 1.2C2.6 -.2 6.8 -.2 9.6 1.4V9.6C6.8 8.2 2.6 8.4 .3 9.6Z" fill="#ee3b1e" stroke="#c8240c" stroke-width=".5"/><path d="M2 1.8C3.8 1 5.8 1 7.4 1.8V8C5.8 7.4 3.8 7.4 2 8Z" fill="#ff8a5c" opacity=".45"/></svg>
<svg style="position:absolute;left:85px;top:68px" width="4" height="4" viewBox="0 0 4 4"><path d="M0 0H4V4Z" fill="#f00"/></svg>
<div style="position:absolute;left:22px;top:88px;width:854px;height:19px;background:#b1c1dd"></div>
<div style="position:absolute;left:1px;top:88px;width:20px;height:19px;background:#e5e5e5"></div>
<div style="position:absolute;left:1px;top:107px;width:875px;height:1px;background:#dbe2ef"></div>
<div style="position:absolute;left:21px;top:88px;width:1px;height:19px;background:#fff"></div>
<div style="position:absolute;left:42px;top:88px;width:1px;height:19px;background:#fff"></div>
<div style="position:absolute;left:63px;top:88px;width:1px;height:19px;background:#fff"></div>
<div style="position:absolute;left:88px;top:88px;width:1px;height:19px;background:#fff"></div>
<div style="position:absolute;left:157px;top:88px;width:1px;height:19px;background:#fff"></div>
<div style="position:absolute;left:226px;top:88px;width:1px;height:19px;background:#fff"></div>
<div style="position:absolute;left:412px;top:88px;width:1px;height:19px;background:#fff"></div>
<div style="position:absolute;left:497px;top:88px;width:1px;height:19px;background:#fff"></div>
<div style="position:absolute;left:596px;top:88px;width:1px;height:19px;background:#fff"></div>
<div style="position:absolute;left:695px;top:88px;width:1px;height:19px;background:#fff"></div>
<div style="position:absolute;left:771px;top:88px;width:1px;height:19px;background:#fff"></div>
<div style="position:absolute;left:840px;top:88px;width:1px;height:19px;background:#fff"></div>
<span class="tt" style="left:92px;top:91.0px;letter-spacing:-0.58px;color:#141414">1018003</span>
<span class="tt" style="left:160px;top:91.0px;letter-spacing:-0.21px;color:#141414">REŽIE</span>
<span class="tt" style="left:228px;top:91.0px;letter-spacing:-0.32px;color:#141414">Nájemné prostor</span>
<span class="tt" style="left:415px;top:91.0px;letter-spacing:-0.58px;color:#141414">1018003</span>
<span class="tt" style="left:519px;top:91.0px;letter-spacing:-0.06px;color:#141414">26.01.2018</span>
<span class="tt" style="left:617px;top:91.0px;letter-spacing:-0.06px;color:#141414">09.02.2018</span>
<span class="tt" style="left:704px;top:91.0px;letter-spacing:-0.06px;color:#141414">02.02.2018</span>
<span class="tt" style="left:774px;top:91.0px;letter-spacing:-0.41px;color:#141414">123456799</span>
<svg style="position:absolute;left:4px;top:93px" width="6" height="10" viewBox="0 0 6 10"><path d="M0 0L6 5L0 10Z" fill="#000"/></svg>
<div style="position:absolute;left:22px;top:108px;width:854px;height:19px;background:#fff"></div>
<div style="position:absolute;left:1px;top:108px;width:20px;height:19px;background:#e5e5e5"></div>
<div style="position:absolute;left:1px;top:127px;width:875px;height:1px;background:#dbe2ef"></div>
<div style="position:absolute;left:21px;top:108px;width:1px;height:19px;background:#eef1f7"></div>
<div style="position:absolute;left:42px;top:108px;width:1px;height:19px;background:#eef1f7"></div>
<div style="position:absolute;left:63px;top:108px;width:1px;height:19px;background:#eef1f7"></div>
<div style="position:absolute;left:88px;top:108px;width:1px;height:19px;background:#eef1f7"></div>
<div style="position:absolute;left:157px;top:108px;width:1px;height:19px;background:#eef1f7"></div>
<div style="position:absolute;left:226px;top:108px;width:1px;height:19px;background:#eef1f7"></div>
<div style="position:absolute;left:412px;top:108px;width:1px;height:19px;background:#eef1f7"></div>
<div style="position:absolute;left:497px;top:108px;width:1px;height:19px;background:#eef1f7"></div>
<div style="position:absolute;left:596px;top:108px;width:1px;height:19px;background:#eef1f7"></div>
<div style="position:absolute;left:695px;top:108px;width:1px;height:19px;background:#eef1f7"></div>
<div style="position:absolute;left:771px;top:108px;width:1px;height:19px;background:#eef1f7"></div>
<div style="position:absolute;left:840px;top:108px;width:1px;height:19px;background:#eef1f7"></div>
<span class="tt" style="left:92px;top:111.0px;letter-spacing:-0.58px;color:#157318">1018004</span>
<span class="tt" style="left:160px;top:111.0px;letter-spacing:-0.21px;color:#157318">REŽIE</span>
<span class="tt" style="left:228px;top:111.0px;letter-spacing:-0.20px;color:#157318">Nájemné prostor za období Únor 2018</span>
<span class="tt" style="left:415px;top:111.0px;letter-spacing:-0.58px;color:#157318">1018004</span>
<span class="tt" style="left:519px;top:111.0px;letter-spacing:-0.06px;color:#157318">01.02.2018</span>
<span class="tt" style="left:617px;top:111.0px;letter-spacing:-0.06px;color:#157318">15.02.2018</span>
<span class="tt" style="left:774px;top:111.0px;letter-spacing:-0.41px;color:#157318">123456799</span>
<div style="position:absolute;left:22px;top:128px;width:854px;height:19px;background:#f3f6fc"></div>
<div style="position:absolute;left:1px;top:128px;width:20px;height:19px;background:#e5e5e5"></div>
<div style="position:absolute;left:1px;top:147px;width:875px;height:1px;background:#dbe2ef"></div>
<div style="position:absolute;left:21px;top:128px;width:1px;height:19px;background:#e6ebf5"></div>
<div style="position:absolute;left:42px;top:128px;width:1px;height:19px;background:#e6ebf5"></div>
<div style="position:absolute;left:63px;top:128px;width:1px;height:19px;background:#e6ebf5"></div>
<div style="position:absolute;left:88px;top:128px;width:1px;height:19px;background:#e6ebf5"></div>
<div style="position:absolute;left:157px;top:128px;width:1px;height:19px;background:#e6ebf5"></div>
<div style="position:absolute;left:226px;top:128px;width:1px;height:19px;background:#e6ebf5"></div>
<div style="position:absolute;left:412px;top:128px;width:1px;height:19px;background:#e6ebf5"></div>
<div style="position:absolute;left:497px;top:128px;width:1px;height:19px;background:#e6ebf5"></div>
<div style="position:absolute;left:596px;top:128px;width:1px;height:19px;background:#e6ebf5"></div>
<div style="position:absolute;left:695px;top:128px;width:1px;height:19px;background:#e6ebf5"></div>
<div style="position:absolute;left:771px;top:128px;width:1px;height:19px;background:#e6ebf5"></div>
<div style="position:absolute;left:840px;top:128px;width:1px;height:19px;background:#e6ebf5"></div>
<span class="tt" style="left:92px;top:131.0px;letter-spacing:-0.58px;color:#141414">1018005</span>
<span class="tt" style="left:160px;top:131.0px;letter-spacing:-0.37px;color:#141414">ZBOŽÍ</span>
<span class="tt" style="left:228px;top:131.0px;letter-spacing:-0.03px;color:#141414">Prodej zboží</span>
<span class="tt" style="left:415px;top:131.0px;letter-spacing:-0.58px;color:#141414">1018005</span>
<span class="tt" style="left:519px;top:131.0px;letter-spacing:-0.06px;color:#141414">02.02.2018</span>
<span class="tt" style="left:617px;top:131.0px;letter-spacing:-0.06px;color:#141414">16.02.2018</span>
<span class="tt" style="left:704px;top:131.0px;letter-spacing:-0.06px;color:#141414">02.02.2018</span>
<span class="tt" style="left:774px;top:131.0px;letter-spacing:-0.41px;color:#141414">456398792</span>
<div style="position:absolute;left:22px;top:148px;width:854px;height:19px;background:#fff"></div>
<div style="position:absolute;left:1px;top:148px;width:20px;height:19px;background:#e5e5e5"></div>
<div style="position:absolute;left:1px;top:167px;width:875px;height:1px;background:#dbe2ef"></div>
<div style="position:absolute;left:21px;top:148px;width:1px;height:19px;background:#eef1f7"></div>
<div style="position:absolute;left:42px;top:148px;width:1px;height:19px;background:#eef1f7"></div>
<div style="position:absolute;left:63px;top:148px;width:1px;height:19px;background:#eef1f7"></div>
<div style="position:absolute;left:88px;top:148px;width:1px;height:19px;background:#eef1f7"></div>
<div style="position:absolute;left:157px;top:148px;width:1px;height:19px;background:#eef1f7"></div>
<div style="position:absolute;left:226px;top:148px;width:1px;height:19px;background:#eef1f7"></div>
<div style="position:absolute;left:412px;top:148px;width:1px;height:19px;background:#eef1f7"></div>
<div style="position:absolute;left:497px;top:148px;width:1px;height:19px;background:#eef1f7"></div>
<div style="position:absolute;left:596px;top:148px;width:1px;height:19px;background:#eef1f7"></div>
<div style="position:absolute;left:695px;top:148px;width:1px;height:19px;background:#eef1f7"></div>
<div style="position:absolute;left:771px;top:148px;width:1px;height:19px;background:#eef1f7"></div>
<div style="position:absolute;left:840px;top:148px;width:1px;height:19px;background:#eef1f7"></div>
<span class="tt" style="left:92px;top:151.0px;letter-spacing:-0.58px;color:#157318">1018009</span>
<span class="tt" style="left:160px;top:151.0px;letter-spacing:-0.21px;color:#157318">REŽIE</span>
<span class="tt" style="left:228px;top:151.0px;letter-spacing:-0.10px;color:#157318">Fakturace servisu</span>
<span class="tt" style="left:415px;top:151.0px;letter-spacing:-0.58px;color:#157318">1018009</span>
<span class="tt" style="left:519px;top:151.0px;letter-spacing:-0.06px;color:#157318">09.01.2018</span>
<span class="tt" style="left:617px;top:151.0px;letter-spacing:-0.06px;color:#157318">23.01.2018</span>
<span class="tt" style="left:774px;top:151.0px;letter-spacing:-0.41px;color:#157318">456398792</span>
<div style="position:absolute;left:22px;top:168px;width:854px;height:19px;background:#f3f6fc"></div>
<div style="position:absolute;left:1px;top:168px;width:20px;height:19px;background:#e5e5e5"></div>
<div style="position:absolute;left:1px;top:187px;width:875px;height:1px;background:#dbe2ef"></div>
<div style="position:absolute;left:21px;top:168px;width:1px;height:19px;background:#e6ebf5"></div>
<div style="position:absolute;left:42px;top:168px;width:1px;height:19px;background:#e6ebf5"></div>
<div style="position:absolute;left:63px;top:168px;width:1px;height:19px;background:#e6ebf5"></div>
<div style="position:absolute;left:88px;top:168px;width:1px;height:19px;background:#e6ebf5"></div>
<div style="position:absolute;left:157px;top:168px;width:1px;height:19px;background:#e6ebf5"></div>
<div style="position:absolute;left:226px;top:168px;width:1px;height:19px;background:#e6ebf5"></div>
<div style="position:absolute;left:412px;top:168px;width:1px;height:19px;background:#e6ebf5"></div>
<div style="position:absolute;left:497px;top:168px;width:1px;height:19px;background:#e6ebf5"></div>
<div style="position:absolute;left:596px;top:168px;width:1px;height:19px;background:#e6ebf5"></div>
<div style="position:absolute;left:695px;top:168px;width:1px;height:19px;background:#e6ebf5"></div>
<div style="position:absolute;left:771px;top:168px;width:1px;height:19px;background:#e6ebf5"></div>
<div style="position:absolute;left:840px;top:168px;width:1px;height:19px;background:#e6ebf5"></div>
<span class="tt" style="left:92px;top:171.0px;letter-spacing:-0.58px;color:#e8141c">1018010</span>
<span class="tt" style="left:160px;top:171.0px;letter-spacing:-0.37px;color:#e8141c">ZBOŽÍ</span>
<span class="tt" style="left:228px;top:171.0px;letter-spacing:-0.19px;color:#e8141c">Vrácení peněz ze servisu</span>
<span class="tt" style="left:415px;top:171.0px;letter-spacing:-0.58px;color:#e8141c">1018010</span>
<span class="tt" style="left:519px;top:171.0px;letter-spacing:-0.06px;color:#e8141c">16.02.2018</span>
<span class="tt" style="left:617px;top:171.0px;letter-spacing:-0.06px;color:#e8141c">02.03.2018</span>
<span class="tt" style="left:774px;top:171.0px;letter-spacing:-0.41px;color:#e8141c">545689222</span>
<div style="position:absolute;left:22px;top:188px;width:854px;height:19px;background:#fff"></div>
<div style="position:absolute;left:1px;top:188px;width:20px;height:19px;background:#e5e5e5"></div>
<div style="position:absolute;left:1px;top:207px;width:875px;height:1px;background:#dbe2ef"></div>
<div style="position:absolute;left:21px;top:188px;width:1px;height:19px;background:#eef1f7"></div>
<div style="position:absolute;left:42px;top:188px;width:1px;height:19px;background:#eef1f7"></div>
<div style="position:absolute;left:63px;top:188px;width:1px;height:19px;background:#eef1f7"></div>
<div style="position:absolute;left:88px;top:188px;width:1px;height:19px;background:#eef1f7"></div>
<div style="position:absolute;left:157px;top:188px;width:1px;height:19px;background:#eef1f7"></div>
<div style="position:absolute;left:226px;top:188px;width:1px;height:19px;background:#eef1f7"></div>
<div style="position:absolute;left:412px;top:188px;width:1px;height:19px;background:#eef1f7"></div>
<div style="position:absolute;left:497px;top:188px;width:1px;height:19px;background:#eef1f7"></div>
<div style="position:absolute;left:596px;top:188px;width:1px;height:19px;background:#eef1f7"></div>
<div style="position:absolute;left:695px;top:188px;width:1px;height:19px;background:#eef1f7"></div>
<div style="position:absolute;left:771px;top:188px;width:1px;height:19px;background:#eef1f7"></div>
<div style="position:absolute;left:840px;top:188px;width:1px;height:19px;background:#eef1f7"></div>
<span class="tt" style="left:92px;top:191.0px;letter-spacing:-0.58px;color:#157318">1018011</span>
<span class="tt" style="left:160px;top:191.0px;letter-spacing:-0.21px;color:#157318">REŽIE</span>
<span class="tt" style="left:228px;top:191.0px;letter-spacing:-0.27px;color:#157318">Doklad v režimu MOSS</span>
<span class="tt" style="left:415px;top:191.0px;letter-spacing:-0.58px;color:#157318">1018011</span>
<span class="tt" style="left:519px;top:191.0px;letter-spacing:-0.06px;color:#157318">16.02.2018</span>
<span class="tt" style="left:617px;top:191.0px;letter-spacing:-0.06px;color:#157318">02.03.2018</span>
<svg style="position:absolute;left:67px;top:189px" width="16" height="16" viewBox="0 0 16 16"><rect x=".5" y="8.5" width="2.2" height="7.2" fill="#f4e0c0" stroke="#a8682c" stroke-width=".7"/><path d="M8 2.6C9.8 4 12.6 3.8 15 2V10C12.6 11.6 9.8 11.6 8 10.4Z" fill="#2ea83a" stroke="#1c7c24" stroke-width=".5"/><path d="M10.2 4.2C11.6 4.4 12.8 4 13.8 3.4V10C12.8 10.6 11.6 10.8 10.2 10.6Z" fill="#7ce07c" opacity=".6"/><path d="M.3 1.2C2.6 -.2 6.8 -.2 9.6 1.4V9.6C6.8 8.2 2.6 8.4 .3 9.6Z" fill="#2ea83a" stroke="#1c7c24" stroke-width=".5"/><path d="M2 1.8C3.8 1 5.8 1 7.4 1.8V8C5.8 7.4 3.8 7.4 2 8Z" fill="#7ce07c" opacity=".45"/></svg>
<svg style="position:absolute;left:85px;top:188px" width="4" height="4" viewBox="0 0 4 4"><path d="M0 0H4V4Z" fill="#f00"/></svg>
<div style="position:absolute;left:1px;top:549px;width:876px;height:16px;background:#f0f0f0"></div>
<div style="position:absolute;left:18px;top:549px;width:17px;height:16px;background:#cdcdcd"></div>
<svg style="position:absolute;left:6px;top:553px" width="7" height="9" viewBox="0 0 7 9"><path d="M5.5 1L2 4.5L5.5 8" stroke="#555" stroke-width="1.5" fill="none"/></svg>
<svg style="position:absolute;left:864px;top:553px" width="7" height="9" viewBox="0 0 7 9"><path d="M1.5 1L5 4.5L1.5 8" stroke="#555" stroke-width="1.5" fill="none"/></svg>
<div style="position:absolute;left:1px;top:565px;width:876px;height:23px;background:#f8f8f8;background-image:radial-gradient(#e9e9e9 0.6px,transparent 0.7px);background-size:2px 2px"></div>
<svg style="position:absolute;left:1px;top:565px" width="876" height="18" viewBox="0 0 876 18"><path d="M10 1.5L15 16.5H41L46 1.5Z" fill="#fff"/><path d="M44 1.5L49 16.5H74L80 1.5Z" fill="#f8f8f8"/><path d="M0 1.5H44" stroke="#555" stroke-width="1.6" fill="none"/><path d="M80 1.5H876" stroke="#555" stroke-width="1.6" fill="none"/><path d="M10 1.5L15 16.5H41L45 4" stroke="#555" stroke-width="1" fill="none"/><path d="M44 1.5L49 16.5H74L80 1.5" stroke="#555" stroke-width="1" fill="none"/></svg>
<span class="tt" style="left:15px;top:568.0px;letter-spacing:-0.29px;color:#111">2017</span>
<span class="tt" style="left:49px;top:568.0px;letter-spacing:-0.29px;color:#111">2018</span>
</div>
<div id="legend">
<div style="position:absolute;left:0;top:190px;width:190px;height:403px;background:repeating-conic-gradient(from 272deg at 100% 100%,rgba(255,255,255,.32) 0 2.6deg,rgba(255,255,255,0) 2.6deg 6.5deg);-webkit-mask-image:radial-gradient(ellipse 200px 400px at 100% 100%,#000 20%,transparent 100%);mask-image:radial-gradient(ellipse 200px 400px at 100% 100%,#000 20%,transparent 100%)"></div>
<div style="position:absolute;left:0px;top:592px;width:190px;height:1px;background:#fff"></div>
<span class="tt" style="left:14px;top:5.0px;line-height:24px;letter-spacing:-0.47px;font-weight:bold;font-size:19px;color:#000">Legenda</span>
<svg style="position:absolute;left:173px;top:9px" width="9" height="9" viewBox="0 0 9 9"><path d="M1 1L8 8M8 1L1 8" stroke="#111" stroke-width="1.5" fill="none"/></svg>
<span class="tt" style="left:12px;top:41.0px;letter-spacing:0.23px;font-weight:bold;color:#111">Faktury vystavené</span>
<div style="position:absolute;left:8px;top:57px;width:177px;height:1px;background:linear-gradient(90deg,#b9bdc3,#c9cdd3 60%,rgba(220,224,230,0))"></div>
<span class="tt" style="left:13px;top:64.0px;letter-spacing:-0.23px;color:#1c1c1c;font-style:italic">Doklad bez možnosti účtování -</span>
<span class="tt" style="left:44px;top:77.0px;letter-spacing:-0.37px;color:#1c1c1c;">doklad bez možnosti</span>
<span class="tt" style="left:44px;top:90.0px;letter-spacing:-0.26px;color:#1c1c1c;">zaúčtování úhrady (nemá</span>
<span class="tt" style="left:44px;top:103.0px;letter-spacing:-0.23px;color:#1c1c1c;">vyplněnou předkontaci)</span>
<span class="tt" style="left:44px;top:116.0px;letter-spacing:-0.29px;color:#1c1c1c;">bude v seznamu označen</span>
<span class="tt" style="left:44px;top:129.0px;letter-spacing:-0.36px;color:#1c1c1c;">kurzívou</span>
<span class="tt" style="left:13px;top:147.0px;letter-spacing:-0.33px;color:#1c1c1c;color:#1616f0;text-decoration:line-through">Smazaný doklad</span>
<span class="tt" style="left:94px;top:147.0px;letter-spacing:-0.36px;color:#1c1c1c;">- po smazání</span>
<span class="tt" style="left:44px;top:160.0px;letter-spacing:-0.33px;color:#1c1c1c;">dokladu se bude doklad</span>
<span class="tt" style="left:44px;top:173.0px;letter-spacing:-0.15px;color:#1c1c1c;">zobrazovat takto</span>
<span class="tt" style="left:13px;top:191.0px;letter-spacing:-0.25px;color:#1c1c1c;color:#e8141c">Dobropis</span>
<span class="tt" style="left:59px;top:191.0px;letter-spacing:-0.24px;color:#1c1c1c;">- dobropis</span>
<span class="tt" style="left:13px;top:211.0px;letter-spacing:-0.16px;color:#1c1c1c;color:#168a1a">Neuh. po splatnosti</span>
<span class="tt" style="left:110px;top:211.0px;letter-spacing:-0.20px;color:#1c1c1c;">- neuhrazené</span>
<span class="tt" style="left:44px;top:224.0px;letter-spacing:-0.21px;color:#1c1c1c;">doklady po datu splatnosti</span>
<svg style="position:absolute;left:15px;top:241px" width="16" height="16" viewBox="0 0 16 16"><path d="M1.5 1H7.5L10.8 4.2V14.6H1.5Z" fill="#fff" stroke="#7e8ea8" stroke-width=".8"/><path d="M7.5 1V4.2H10.8" fill="#e8eef8" stroke="#7e8ea8" stroke-width=".6"/><path d="M3 4.5H7M3 6.5H9.4M3 8.5H9.4M3 10.5H9.4M3 12.5H9.4" stroke="#4a86d8" stroke-width=".8"/><rect x="7" y="7.2" width="8.6" height="8.4" rx="1.6" fill="#2a86d8" stroke="#1a6ab8" stroke-width=".5"/><path d="M13.4 9.6C12.4 8.8 9.6 8.8 9.6 10.3C9.6 11.9 13.2 11.1 13.2 12.7C13.2 14.1 10.2 14 9.3 13.2" fill="none" stroke="#fff" stroke-width="1.25"/></svg>
<span class="tt" style="left:44px;top:242.0px;letter-spacing:-0.16px;color:#1c1c1c;">stornovaný doklad</span>
<svg style="position:absolute;left:15px;top:266px" width="16" height="16" viewBox="0 0 16 16"><path d="M1.5 1H7.5L10.8 4.2V14.6H1.5Z" fill="#fff" stroke="#7e8ea8" stroke-width=".8"/><path d="M7.5 1V4.2H10.8" fill="#e8eef8" stroke="#7e8ea8" stroke-width=".6"/><path d="M3 4.5H7M3 6.5H9.4M3 8.5H9.4M3 10.5H9.4M3 12.5H9.4" stroke="#4a86d8" stroke-width=".8"/><rect x="7" y="7.2" width="8.6" height="8.4" rx="1.6" fill="#e0202c" stroke="#b81018" stroke-width=".5"/><path d="M13.4 9.6C12.4 8.8 9.6 8.8 9.6 10.3C9.6 11.9 13.2 11.1 13.2 12.7C13.2 14.1 10.2 14 9.3 13.2" fill="none" stroke="#fff" stroke-width="1.25"/></svg>
<span class="tt" style="left:44px;top:266.0px;letter-spacing:-0.18px;color:#1c1c1c;">stornovací protidoklad k</span>
<span class="tt" style="left:44px;top:279.0px;letter-spacing:-0.30px;color:#1c1c1c;">dokladu stornovanému</span>
<svg style="position:absolute;left:15px;top:297px" width="16" height="16" viewBox="0 0 16 16"><path d="M1.5 1H7.5L10.8 4.2V14.6H1.5Z" fill="#fff" stroke="#7e8ea8" stroke-width=".8"/><path d="M7.5 1V4.2H10.8" fill="#e8eef8" stroke="#7e8ea8" stroke-width=".6"/><path d="M3 4.5H7M3 6.5H9.4M3 8.5H9.4M3 10.5H9.4M3 12.5H9.4" stroke="#4a86d8" stroke-width=".8"/><path d="M7.6 10V8C7.6 5.4 12.4 5.4 12.4 8V10" fill="none" stroke="#f0a020" stroke-width="1.5"/><rect x="5.5" y="9.2" width="9.4" height="6.4" rx="1" fill="url(#gLock)" stroke="#d08010" stroke-width=".6"/><rect x="9.3" y="11.4" width="1.8" height="2" fill="#8a1a1a"/></svg>
<span class="tt" style="left:44px;top:298.0px;letter-spacing:-0.34px;color:#1c1c1c;">uzamčený doklad</span>
<svg style="position:absolute;left:15px;top:322px" width="16" height="16" viewBox="0 0 16 16"><rect x="2.5" y="1" width="9" height="12.5" fill="#fff" stroke="#3c9a3a" stroke-width="1"/><path d="M1.5 2.5H3.2M1.5 4.5H3.2M1.5 6.5H3.2M1.5 8.5H3.2M1.5 10.5H3.2M1.5 12.5H3.2" stroke="#666" stroke-width=".7"/><path d="M4.5 3.5H9.5" stroke="#b8c8b8" stroke-width=".8"/><path d="M7.6 10V8C7.6 5.4 12.4 5.4 12.4 8V10" fill="none" stroke="#f0a020" stroke-width="1.5"/><rect x="5.5" y="9.2" width="9.4" height="6.4" rx="1" fill="url(#gLock)" stroke="#d08010" stroke-width=".6"/><rect x="9.3" y="11.4" width="1.8" height="2" fill="#8a1a1a"/></svg>
<span class="tt" style="left:44px;top:323.0px;letter-spacing:-0.30px;color:#1c1c1c;">doklad uzamčený skladovou</span>
<span class="tt" style="left:44px;top:336.0px;letter-spacing:-0.13px;color:#1c1c1c;">uzávěrkou</span>
<span class="tt" style="left:9px;top:364.0px;letter-spacing:0.06px;font-weight:bold;color:#111">Ovládání seznamu</span>
<div style="position:absolute;left:8px;top:380px;width:177px;height:1px;background:linear-gradient(90deg,#b9bdc3,#c9cdd3 60%,rgba(220,224,230,0))"></div>
<svg style="position:absolute;left:13px;top:386px" width="16" height="16" viewBox="0 0 16 16"><text x="0.3" y="6.8" font-family="Liberation Serif,serif" font-weight="bold" font-size="8" fill="#3a3a3a">A</text><text x="3.6" y="14.2" font-family="Liberation Serif,serif" font-weight="bold" font-size="10.5" fill="#3a3a3a">Z</text><path d="M13.2 .5V13" stroke="#222" stroke-width="1.1"/><path d="M10.8 10L13.2 14.5L15.6 10Z" fill="#222"/></svg>
<span class="tt" style="left:44px;top:387.0px;letter-spacing:-0.27px;color:#1c1c1c;">zobrazení sloupců pro</span>
<span class="tt" style="left:44px;top:400.0px;letter-spacing:-0.07px;color:#1c1c1c;">řazení</span>
<svg style="position:absolute;left:14px;top:417px" width="5" height="5" viewBox="0 0 5 5"><path d="M0 0H5L0 5Z" fill="#2a4fa0"/></svg>
<span class="tt" style="left:44px;top:418.0px;letter-spacing:-0.42px;color:#1c1c1c;">kliknutím na sloupec</span>
<span class="tt" style="left:44px;top:431.0px;letter-spacing:-0.26px;color:#1c1c1c;">seřadíte seznam</span>
<svg style="position:absolute;left:14px;top:454px" width="15" height="4" viewBox="0 0 15 4"><path d="M0 4L3 0L6 4Z M8 0H14L11 4Z" fill="#222"/></svg>
<span class="tt" style="left:44px;top:449.0px;letter-spacing:-0.22px;color:#1c1c1c;">řazení vzestupně nebo</span>
<span class="tt" style="left:44px;top:462.0px;letter-spacing:-0.28px;color:#1c1c1c;">sestupně</span>
<span class="tt" style="left:13px;top:480.0px;letter-spacing:-0.17px;color:#1c1c1c;color:#1616f0">Rychlé hledání</span>
<span class="tt" style="left:89px;top:480.0px;letter-spacing:-0.32px;color:#1c1c1c;">- hledání podle</span>
<span class="tt" style="left:44px;top:493.0px;letter-spacing:-0.30px;color:#1c1c1c;">napsaných znaků v</span>
<span class="tt" style="left:44px;top:506.0px;letter-spacing:-0.38px;color:#1c1c1c;">seznamu</span>
<div style="position:absolute;left:14px;top:523px;width:22px;height:21px;background:#e4e4e4;border-right:1px solid #cfd6e4"></div>
<svg style="position:absolute;left:17px;top:528px" width="6" height="10" viewBox="0 0 6 10"><path d="M0 0L6 5L0 10Z" fill="#000"/></svg>
<span class="tt" style="left:44px;top:524.0px;letter-spacing:-0.37px;color:#1c1c1c;">tažením myši se označí vice</span>
<span class="tt" style="left:44px;top:537.0px;letter-spacing:-0.24px;color:#1c1c1c;">záznamů</span>
<svg style="position:absolute;left:16px;top:555px" width="16" height="16" viewBox="0 0 16 16"><path d="M8.4 4.4L4.2 8.6C3.4 9.4 2.4 8.4 3.2 7.6L7.8 3C9.4 1.4 11.4 3.4 9.8 5L5 9.8C3 11.8 .4 9.2 2.4 7.2L6.4 3.2" fill="none" stroke="#9a9a9a" stroke-width=".9" stroke-linecap="round"/></svg>
<span class="tt" style="left:44px;top:555.0px;letter-spacing:-0.29px;color:#1c1c1c;">připojené dokumenty</span>
</div>
<div id="status">
<span class="tt" style="left:5px;top:7.0px;letter-spacing:-0.06px;color:#fff">J. Bohatý - SPORT (demo daňová evidence) (IČ 12345678)</span>
<div style="position:absolute;left:433px;top:2px;width:1px;height:21px;background:#e3e9f4"></div>
<div style="position:absolute;left:474px;top:2px;width:1px;height:21px;background:#e3e9f4"></div>
<div style="position:absolute;left:555px;top:2px;width:1px;height:21px;background:#e3e9f4"></div>
<div style="position:absolute;left:760px;top:2px;width:1px;height:21px;background:#e3e9f4"></div>
<div style="position:absolute;left:851px;top:2px;width:1px;height:21px;background:#e3e9f4"></div>
<div style="position:absolute;left:968px;top:2px;width:1px;height:21px;background:#e3e9f4"></div>
<div style="position:absolute;left:1132px;top:2px;width:1px;height:21px;background:#e3e9f4"></div>
<span class="tt" style="left:437px;top:7.0px;letter-spacing:-0.54px;color:#fff">2018</span>
<span class="tt" style="left:478px;top:7.0px;letter-spacing:-0.16px;color:#fff">27.03.2018</span>
<span class="tt" style="left:562px;top:7.0px;letter-spacing:0.06px;color:#fff">Jan Novák</span>
<svg style="position:absolute;left:768px;top:4px" width="16" height="16" viewBox="0 0 16 16"><path d="M0 2.5H16V16H0Z" fill="#cfd8ec"/><path d="M2.2 0.5L3.4 3.4H1Z M5.7 0.5L6.9 3.4H4.5Z M9.2 0.5L10.4 3.4H8Z M12.7 0.5L13.9 3.4H11.5Z" fill="#cfd8ec"/><path d="M2.2 2.2L3 4.2H1.4Z M5.7 2.2L6.5 4.2H4.9Z M9.2 2.2L10 4.2H8.4Z M12.7 2.2L13.5 4.2H11.9Z" fill="#1a4889"/><text x="8" y="14" text-anchor="middle" font-family="Liberation Sans,sans-serif" font-weight="bold" font-size="9.5" fill="#1a4889">15</text></svg>
<div class="dd" style="left:792.5px;top:11px;border-top-color:#cfd8ec;border-left-width:4px;border-right-width:4px;border-top-width:4px"></div>
<svg style="position:absolute;left:810px;top:4px" width="16" height="16" viewBox="0 0 16 16"><circle cx="2.2" cy="13.2" r="1.9" fill="#cfd8ec"/><path d="M.5 7.6C4.8 7.6 8 10.8 8 15" fill="none" stroke="#cfd8ec" stroke-width="2.5"/><path d="M.5 2C8 2 13.6 7.6 13.6 15" fill="none" stroke="#cfd8ec" stroke-width="2.5"/></svg>
<div class="dd" style="left:834.5px;top:11px;border-top-color:#cfd8ec;border-left-width:4px;border-right-width:4px;border-top-width:4px"></div>
<svg style="position:absolute;left:857px;top:4px" width="17" height="16" viewBox="0 0 17 16"><path d="M8.5 0V11" stroke="#cfd8ec" stroke-width="1.6"/><path d="M3.6 6.4L8.5 11.6L13.4 6.4" fill="none" stroke="#cfd8ec" stroke-width="1.6"/><path d="M1 11.5V15.2H16V11.5" fill="none" stroke="#cfd8ec" stroke-width="1.6"/></svg>
<span class="tt" style="left:892px;top:7.0px;letter-spacing:-0.03px;color:#fff">Verze: 18.300</span>
<span class="tt" style="left:971px;top:7.0px;letter-spacing:-0.12px;color:#fff">Lic: K3FN-98C2-6C5D-QDQM</span>
<span class="tt" style="left:1138px;top:7.0px;letter-spacing:-0.01px;color:#fff">PIN: 081 52 30</span>
<svg style="position:absolute;left:1240px;top:4px" width="18" height="17" viewBox="0 0 18 17"><path d="M2.6 9.4C1.6 4.6 6.4 1 11.2 2.6" fill="none" stroke="#cfd8ec" stroke-width="2.2"/><path d="M9.4 -.2L15 2.8L10.2 6.6Z" fill="#cfd8ec"/><path d="M15.4 7.6C16.4 12.4 11.6 16 6.8 14.4" fill="none" stroke="#cfd8ec" stroke-width="2.2"/><path d="M8.6 17.2L3 14.2L7.8 10.4Z" fill="#cfd8ec"/></svg>
<div style="position:absolute;left:1277px;top:15px;width:2px;height:2px;background:#e6d9c3"></div>
<div style="position:absolute;left:1274px;top:18px;width:2px;height:2px;background:#e6d9c3"></div>
<div style="position:absolute;left:1277px;top:18px;width:2px;height:2px;background:#e6d9c3"></div>
<div style="position:absolute;left:1271px;top:21px;width:2px;height:2px;background:#e6d9c3"></div>
<div style="position:absolute;left:1274px;top:21px;width:2px;height:2px;background:#e6d9c3"></div>
<div style="position:absolute;left:1277px;top:21px;width:2px;height:2px;background:#e6d9c3"></div>
</div>
<div id="frame"></div>
</div>
</body></html>
